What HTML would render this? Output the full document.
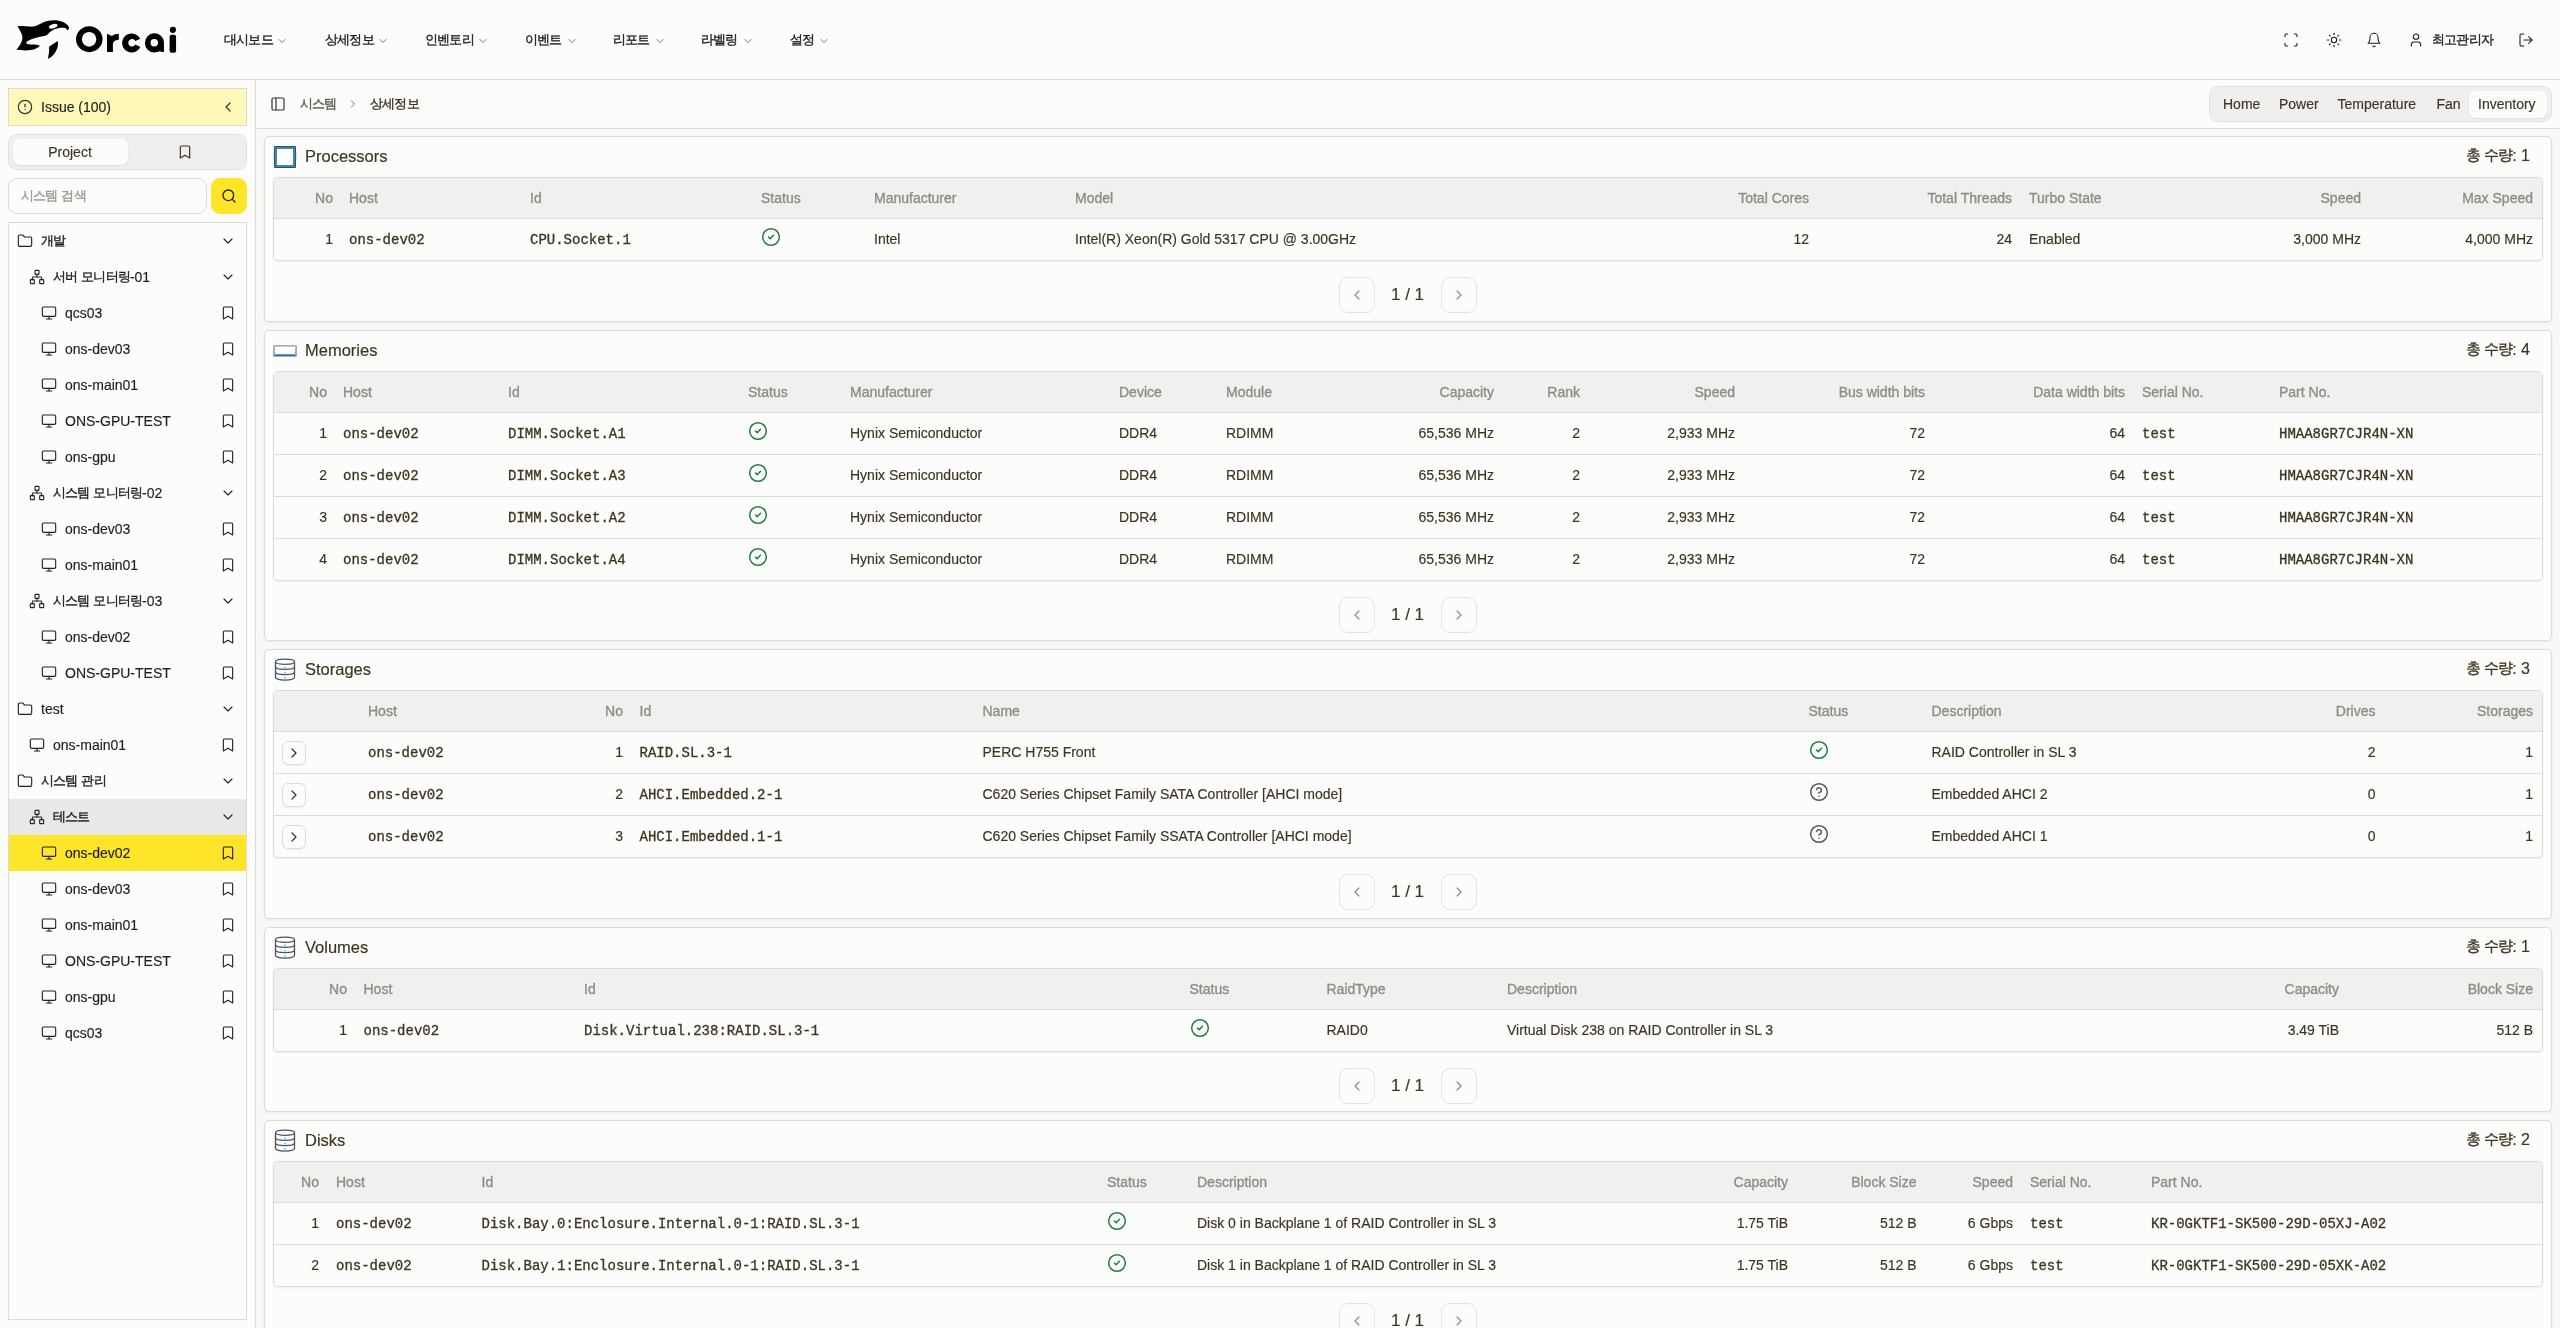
<!DOCTYPE html><html><head><meta charset="utf-8"><title>Orcai</title><style>*{box-sizing:border-box;margin:0;padding:0}
html,body{width:2560px;height:1328px;overflow:hidden;background:#fcfcfa;font-family:"Liberation Sans",sans-serif;}
.t{position:absolute;white-space:nowrap;-webkit-text-stroke:0.15px currentColor;}
.b{position:absolute;}
.ic{position:absolute;overflow:visible;}
.k{font-size:0.93em;letter-spacing:-0.064em;position:relative;top:-1px;-webkit-text-stroke:0.35px currentColor;}
</style></head><body><div id="root" style="position:absolute;left:0;top:0;width:2560px;height:1328px;overflow:hidden;will-change:transform"><div class="b" style="left:0px;top:0px;width:2560px;height:80px;background:#fcfcfa;border-bottom:1px solid #dcdbd7;"></div>
<svg class="ic" style="left:12px;top:14px;width:64px;height:48px" viewBox="0 0 1771 1328">
<path fill="#000" d="M150 340 C260 320 380 330 480 345 C560 355 620 350 700 310 C820 250 950 175 1150 170 C1330 168 1520 240 1575 360 C1585 400 1560 440 1530 455 C1510 400 1470 380 1420 380 C1260 385 1120 420 1010 540 C980 575 950 600 880 610 C700 640 520 690 410 760 C380 790 400 830 440 835 C560 840 700 840 775 880 C700 960 560 1010 380 1010 C260 1010 180 1000 120 985 C220 880 290 760 290 650 C290 560 220 460 150 340 Z"/>
<ellipse cx="1140" cy="340" rx="120" ry="58" transform="rotate(-16 1140 340)" fill="#fcfcfa"/>
<path fill="#000" d="M1025 905 C1100 850 1200 790 1265 745 C1290 850 1260 960 1200 1060 C1140 1150 1060 1220 995 1240 C1010 1130 1040 1050 1025 905 Z"/>
</svg>
<svg class="ic" style="left:72px;top:20px;width:110px;height:40px" viewBox="0 0 2560 931" fill="#000">
<path fill-rule="evenodd" d="M402 143 A308 303 0 1 1 402 749 A308 303 0 1 1 402 143 Z M398 277 A168 172 0 1 0 398 621 A168 172 0 1 0 398 277 Z"/>
<path d="M815 318 L930 372 C975 338 1025 322 1090 320 L1090 462 C1030 462 985 478 952 540 L952 745 L815 745 Z"/>
<path d="M1588 438 A222 222 0 1 0 1590 628 L1476 572 A88 88 0 1 1 1476 490 Z"/>
<path fill-rule="evenodd" d="M2140 520 L2140 745 L2080 745 L2045 722 C2005 745 1960 755 1915 755 A222 222 0 1 1 2140 520 Z M1915 443 A87 87 0 1 0 1915 617 A87 87 0 1 0 1915 443 Z"/>
<rect x="2272" y="345" width="150" height="415" rx="45"/>
<circle cx="2348" cy="228" r="72"/>
</svg>
<div class="t" style="left:224px;top:30.0px;height:20px;line-height:20px;font-size:14px;color:#1f1f1f;font-family:'Liberation Sans',sans-serif;font-weight:400;"><span class="k">대시보드</span></div>
<svg class="ic" style="left:275.5px;top:34.5px;width:12px;height:12px" viewBox="0 0 24 24" fill="none" stroke="#555" stroke-width="1.6" stroke-linecap="round" stroke-linejoin="round"><path d="m6 9 6 6 6-6"/></svg>
<div class="t" style="left:325px;top:30.0px;height:20px;line-height:20px;font-size:14px;color:#1f1f1f;font-family:'Liberation Sans',sans-serif;font-weight:400;"><span class="k">상세정보</span></div>
<svg class="ic" style="left:376.5px;top:34.5px;width:12px;height:12px" viewBox="0 0 24 24" fill="none" stroke="#555" stroke-width="1.6" stroke-linecap="round" stroke-linejoin="round"><path d="m6 9 6 6 6-6"/></svg>
<div class="t" style="left:425px;top:30.0px;height:20px;line-height:20px;font-size:14px;color:#1f1f1f;font-family:'Liberation Sans',sans-serif;font-weight:400;"><span class="k">인벤토리</span></div>
<svg class="ic" style="left:476.5px;top:34.5px;width:12px;height:12px" viewBox="0 0 24 24" fill="none" stroke="#555" stroke-width="1.6" stroke-linecap="round" stroke-linejoin="round"><path d="m6 9 6 6 6-6"/></svg>
<div class="t" style="left:525px;top:30.0px;height:20px;line-height:20px;font-size:14px;color:#1f1f1f;font-family:'Liberation Sans',sans-serif;font-weight:400;"><span class="k">이벤트</span></div>
<svg class="ic" style="left:566px;top:34.5px;width:12px;height:12px" viewBox="0 0 24 24" fill="none" stroke="#555" stroke-width="1.6" stroke-linecap="round" stroke-linejoin="round"><path d="m6 9 6 6 6-6"/></svg>
<div class="t" style="left:613px;top:30.0px;height:20px;line-height:20px;font-size:14px;color:#1f1f1f;font-family:'Liberation Sans',sans-serif;font-weight:400;"><span class="k">리포트</span></div>
<svg class="ic" style="left:654px;top:34.5px;width:12px;height:12px" viewBox="0 0 24 24" fill="none" stroke="#555" stroke-width="1.6" stroke-linecap="round" stroke-linejoin="round"><path d="m6 9 6 6 6-6"/></svg>
<div class="t" style="left:701px;top:30.0px;height:20px;line-height:20px;font-size:14px;color:#1f1f1f;font-family:'Liberation Sans',sans-serif;font-weight:400;"><span class="k">라벨링</span></div>
<svg class="ic" style="left:741.5px;top:34.5px;width:12px;height:12px" viewBox="0 0 24 24" fill="none" stroke="#555" stroke-width="1.6" stroke-linecap="round" stroke-linejoin="round"><path d="m6 9 6 6 6-6"/></svg>
<div class="t" style="left:790px;top:30.0px;height:20px;line-height:20px;font-size:14px;color:#1f1f1f;font-family:'Liberation Sans',sans-serif;font-weight:400;"><span class="k">설정</span></div>
<svg class="ic" style="left:818px;top:34.5px;width:12px;height:12px" viewBox="0 0 24 24" fill="none" stroke="#555" stroke-width="1.6" stroke-linecap="round" stroke-linejoin="round"><path d="m6 9 6 6 6-6"/></svg>
<svg class="ic" style="left:2283px;top:32px;width:16px;height:16px" viewBox="0 0 24 24" fill="none" stroke="#1f1f1f" stroke-width="1.6" stroke-linecap="round" stroke-linejoin="round"><path d="M3 7V5a2 2 0 0 1 2-2h2"/><path d="M17 3h2a2 2 0 0 1 2 2v2"/><path d="M21 17v2a2 2 0 0 1-2 2h-2"/><path d="M7 21H5a2 2 0 0 1-2-2v-2"/></svg>
<svg class="ic" style="left:2326px;top:32px;width:16px;height:16px" viewBox="0 0 24 24" fill="none" stroke="#1f1f1f" stroke-width="1.6" stroke-linecap="round" stroke-linejoin="round"><circle cx="12" cy="12" r="4"/><path d="M12 2v2"/><path d="M12 20v2"/><path d="m4.93 4.93 1.41 1.41"/><path d="m17.66 17.66 1.41 1.41"/><path d="M2 12h2"/><path d="M20 12h2"/><path d="m6.34 17.66-1.41 1.41"/><path d="m19.07 4.93-1.41 1.41"/></svg>
<svg class="ic" style="left:2366px;top:32px;width:16px;height:16px" viewBox="0 0 24 24" fill="none" stroke="#1f1f1f" stroke-width="1.6" stroke-linecap="round" stroke-linejoin="round"><path d="M6 8a6 6 0 0 1 12 0c0 7 3 9 3 9H3s3-2 3-9"/><path d="M10.3 21a1.94 1.94 0 0 0 3.4 0"/></svg>
<svg class="ic" style="left:2408px;top:32px;width:16px;height:16px" viewBox="0 0 24 24" fill="none" stroke="#1f1f1f" stroke-width="1.6" stroke-linecap="round" stroke-linejoin="round"><path d="M19 21v-2a4 4 0 0 0-4-4H9a4 4 0 0 0-4 4v2"/><circle cx="12" cy="7" r="4"/></svg>
<div class="t" style="left:2432px;top:30.0px;height:20px;line-height:20px;font-size:14px;color:#1f1f1f;font-family:'Liberation Sans',sans-serif;font-weight:400;"><span class="k">최고관리자</span></div>
<svg class="ic" style="left:2518px;top:32px;width:16px;height:16px" viewBox="0 0 24 24" fill="none" stroke="#1f1f1f" stroke-width="1.6" stroke-linecap="round" stroke-linejoin="round"><path d="M9 21H5a2 2 0 0 1-2-2V5a2 2 0 0 1 2-2h4"/><polyline points="16 17 21 12 16 7"/><line x1="21" x2="9" y1="12" y2="12"/></svg>
<div class="b" style="left:0px;top:80px;width:256px;height:1248px;background:#fcfcfa;border-right:1px solid #dcdbd7;"></div>
<div class="b" style="left:8px;top:88px;width:239px;height:38px;background:#fff9b9;border:1px solid #d9d8d2;"></div>
<svg class="ic" style="left:17px;top:99px;width:16px;height:16px" viewBox="0 0 24 24" fill="none" stroke="#333" stroke-width="1.8" stroke-linecap="round" stroke-linejoin="round"><circle cx="12" cy="12" r="10"/><line x1="12" x2="12" y1="8" y2="12"/><line x1="12" x2="12.01" y1="16" y2="16"/></svg>
<div class="t" style="left:41px;top:97.0px;height:20px;line-height:20px;font-size:14px;color:#1f1f1f;font-family:'Liberation Sans',sans-serif;font-weight:400;">Issue (100)</div>
<svg class="ic" style="left:220px;top:99px;width:16px;height:16px" viewBox="0 0 24 24" fill="none" stroke="#333" stroke-width="1.8" stroke-linecap="round" stroke-linejoin="round"><path d="m15 18-6-6 6-6"/></svg>
<div class="b" style="left:8px;top:134px;width:239px;height:36px;background:#f0efed;border:1px solid #e2e1dd;border-radius:9px;"></div>
<div class="b" style="left:13px;top:139px;width:115px;height:26px;background:#fcfcfa;border-radius:7px;box-shadow:0 1px 2px rgba(0,0,0,0.08);"></div>
<div class="t" style="left:-230px;width:600px;text-align:center;top:142.0px;height:20px;line-height:20px;font-size:14px;color:#3d3320;font-family:'Liberation Sans',sans-serif;font-weight:400;">Project</div>
<svg class="ic" style="left:177px;top:144px;width:16px;height:16px" viewBox="0 0 24 24" fill="none" stroke="#3d3320" stroke-width="1.8" stroke-linecap="round" stroke-linejoin="round"><path d="m19 21-7-4-7 4V5a2 2 0 0 1 2-2h10a2 2 0 0 1 2 2v16z"/></svg>
<div class="b" style="left:8px;top:178px;width:199px;height:36px;background:#fcfcfa;border:1px solid #dcdbd7;border-radius:9px;"></div>
<div class="t" style="left:21px;top:186.0px;height:20px;line-height:20px;font-size:14px;color:#9b9a95;font-family:'Liberation Sans',sans-serif;font-weight:400;"><span class="k">시스템</span> <span class="k">검색</span></div>
<div class="b" style="left:211px;top:178px;width:36px;height:36px;background:#ffe52a;border-radius:9px;"></div>
<svg class="ic" style="left:221px;top:188px;width:16px;height:16px" viewBox="0 0 24 24" fill="none" stroke="#222" stroke-width="2" stroke-linecap="round" stroke-linejoin="round"><circle cx="11" cy="11" r="8"/><path d="m21 21-4.3-4.3"/></svg>
<div class="b" style="left:8px;top:222px;width:239px;height:1098px;background:#fcfcfa;border:1px solid #dcdbd7;"></div>
<svg class="ic" style="left:17px;top:233px;width:16px;height:16px" viewBox="0 0 24 24" fill="none" stroke="#222" stroke-width="1.7" stroke-linecap="round" stroke-linejoin="round"><path d="M20 20a2 2 0 0 0 2-2V8a2 2 0 0 0-2-2h-7.9a2 2 0 0 1-1.69-.9L9.6 3.9A2 2 0 0 0 7.93 3H4a2 2 0 0 0-2 2v13a2 2 0 0 0 2 2Z"/></svg>
<div class="t" style="left:41px;top:231.0px;height:20px;line-height:20px;font-size:14px;color:#1f1f1f;font-family:'Liberation Sans',sans-serif;font-weight:400;"><span class="k">개발</span></div>
<svg class="ic" style="left:220px;top:233px;width:16px;height:16px" viewBox="0 0 24 24" fill="none" stroke="#222" stroke-width="1.7" stroke-linecap="round" stroke-linejoin="round"><path d="m6 9 6 6 6-6"/></svg>
<svg class="ic" style="left:29px;top:269px;width:16px;height:16px" viewBox="0 0 24 24" fill="none" stroke="#222" stroke-width="1.7" stroke-linecap="round" stroke-linejoin="round"><rect x="16" y="16" width="6" height="6" rx="1"/><rect x="2" y="16" width="6" height="6" rx="1"/><rect x="9" y="2" width="6" height="6" rx="1"/><path d="M5 16v-3a1 1 0 0 1 1-1h12a1 1 0 0 1 1 1v3"/><path d="M12 12V8"/></svg>
<div class="t" style="left:53px;top:267.0px;height:20px;line-height:20px;font-size:14px;color:#1f1f1f;font-family:'Liberation Sans',sans-serif;font-weight:400;"><span class="k">서버</span> <span class="k">모니터링</span>-01</div>
<svg class="ic" style="left:220px;top:269px;width:16px;height:16px" viewBox="0 0 24 24" fill="none" stroke="#222" stroke-width="1.7" stroke-linecap="round" stroke-linejoin="round"><path d="m6 9 6 6 6-6"/></svg>
<svg class="ic" style="left:41px;top:305px;width:16px;height:16px" viewBox="0 0 24 24" fill="none" stroke="#222" stroke-width="1.7" stroke-linecap="round" stroke-linejoin="round"><rect width="20" height="14" x="2" y="3" rx="2"/><line x1="8" x2="16" y1="21" y2="21"/><line x1="12" x2="12" y1="17" y2="21"/></svg>
<div class="t" style="left:65px;top:303.0px;height:20px;line-height:20px;font-size:14px;color:#1f1f1f;font-family:'Liberation Sans',sans-serif;font-weight:400;">qcs03</div>
<svg class="ic" style="left:220px;top:305px;width:16px;height:16px" viewBox="0 0 24 24" fill="none" stroke="#222" stroke-width="1.7" stroke-linecap="round" stroke-linejoin="round"><path d="m19 21-7-4-7 4V5a2 2 0 0 1 2-2h10a2 2 0 0 1 2 2v16z"/></svg>
<svg class="ic" style="left:41px;top:341px;width:16px;height:16px" viewBox="0 0 24 24" fill="none" stroke="#222" stroke-width="1.7" stroke-linecap="round" stroke-linejoin="round"><rect width="20" height="14" x="2" y="3" rx="2"/><line x1="8" x2="16" y1="21" y2="21"/><line x1="12" x2="12" y1="17" y2="21"/></svg>
<div class="t" style="left:65px;top:339.0px;height:20px;line-height:20px;font-size:14px;color:#1f1f1f;font-family:'Liberation Sans',sans-serif;font-weight:400;">ons-dev03</div>
<svg class="ic" style="left:220px;top:341px;width:16px;height:16px" viewBox="0 0 24 24" fill="none" stroke="#222" stroke-width="1.7" stroke-linecap="round" stroke-linejoin="round"><path d="m19 21-7-4-7 4V5a2 2 0 0 1 2-2h10a2 2 0 0 1 2 2v16z"/></svg>
<svg class="ic" style="left:41px;top:377px;width:16px;height:16px" viewBox="0 0 24 24" fill="none" stroke="#222" stroke-width="1.7" stroke-linecap="round" stroke-linejoin="round"><rect width="20" height="14" x="2" y="3" rx="2"/><line x1="8" x2="16" y1="21" y2="21"/><line x1="12" x2="12" y1="17" y2="21"/></svg>
<div class="t" style="left:65px;top:375.0px;height:20px;line-height:20px;font-size:14px;color:#1f1f1f;font-family:'Liberation Sans',sans-serif;font-weight:400;">ons-main01</div>
<svg class="ic" style="left:220px;top:377px;width:16px;height:16px" viewBox="0 0 24 24" fill="none" stroke="#222" stroke-width="1.7" stroke-linecap="round" stroke-linejoin="round"><path d="m19 21-7-4-7 4V5a2 2 0 0 1 2-2h10a2 2 0 0 1 2 2v16z"/></svg>
<svg class="ic" style="left:41px;top:413px;width:16px;height:16px" viewBox="0 0 24 24" fill="none" stroke="#222" stroke-width="1.7" stroke-linecap="round" stroke-linejoin="round"><rect width="20" height="14" x="2" y="3" rx="2"/><line x1="8" x2="16" y1="21" y2="21"/><line x1="12" x2="12" y1="17" y2="21"/></svg>
<div class="t" style="left:65px;top:411.0px;height:20px;line-height:20px;font-size:14px;color:#1f1f1f;font-family:'Liberation Sans',sans-serif;font-weight:400;">ONS-GPU-TEST</div>
<svg class="ic" style="left:220px;top:413px;width:16px;height:16px" viewBox="0 0 24 24" fill="none" stroke="#222" stroke-width="1.7" stroke-linecap="round" stroke-linejoin="round"><path d="m19 21-7-4-7 4V5a2 2 0 0 1 2-2h10a2 2 0 0 1 2 2v16z"/></svg>
<svg class="ic" style="left:41px;top:449px;width:16px;height:16px" viewBox="0 0 24 24" fill="none" stroke="#222" stroke-width="1.7" stroke-linecap="round" stroke-linejoin="round"><rect width="20" height="14" x="2" y="3" rx="2"/><line x1="8" x2="16" y1="21" y2="21"/><line x1="12" x2="12" y1="17" y2="21"/></svg>
<div class="t" style="left:65px;top:447.0px;height:20px;line-height:20px;font-size:14px;color:#1f1f1f;font-family:'Liberation Sans',sans-serif;font-weight:400;">ons-gpu</div>
<svg class="ic" style="left:220px;top:449px;width:16px;height:16px" viewBox="0 0 24 24" fill="none" stroke="#222" stroke-width="1.7" stroke-linecap="round" stroke-linejoin="round"><path d="m19 21-7-4-7 4V5a2 2 0 0 1 2-2h10a2 2 0 0 1 2 2v16z"/></svg>
<svg class="ic" style="left:29px;top:485px;width:16px;height:16px" viewBox="0 0 24 24" fill="none" stroke="#222" stroke-width="1.7" stroke-linecap="round" stroke-linejoin="round"><rect x="16" y="16" width="6" height="6" rx="1"/><rect x="2" y="16" width="6" height="6" rx="1"/><rect x="9" y="2" width="6" height="6" rx="1"/><path d="M5 16v-3a1 1 0 0 1 1-1h12a1 1 0 0 1 1 1v3"/><path d="M12 12V8"/></svg>
<div class="t" style="left:53px;top:483.0px;height:20px;line-height:20px;font-size:14px;color:#1f1f1f;font-family:'Liberation Sans',sans-serif;font-weight:400;"><span class="k">시스템</span> <span class="k">모니터링</span>-02</div>
<svg class="ic" style="left:220px;top:485px;width:16px;height:16px" viewBox="0 0 24 24" fill="none" stroke="#222" stroke-width="1.7" stroke-linecap="round" stroke-linejoin="round"><path d="m6 9 6 6 6-6"/></svg>
<svg class="ic" style="left:41px;top:521px;width:16px;height:16px" viewBox="0 0 24 24" fill="none" stroke="#222" stroke-width="1.7" stroke-linecap="round" stroke-linejoin="round"><rect width="20" height="14" x="2" y="3" rx="2"/><line x1="8" x2="16" y1="21" y2="21"/><line x1="12" x2="12" y1="17" y2="21"/></svg>
<div class="t" style="left:65px;top:519.0px;height:20px;line-height:20px;font-size:14px;color:#1f1f1f;font-family:'Liberation Sans',sans-serif;font-weight:400;">ons-dev03</div>
<svg class="ic" style="left:220px;top:521px;width:16px;height:16px" viewBox="0 0 24 24" fill="none" stroke="#222" stroke-width="1.7" stroke-linecap="round" stroke-linejoin="round"><path d="m19 21-7-4-7 4V5a2 2 0 0 1 2-2h10a2 2 0 0 1 2 2v16z"/></svg>
<svg class="ic" style="left:41px;top:557px;width:16px;height:16px" viewBox="0 0 24 24" fill="none" stroke="#222" stroke-width="1.7" stroke-linecap="round" stroke-linejoin="round"><rect width="20" height="14" x="2" y="3" rx="2"/><line x1="8" x2="16" y1="21" y2="21"/><line x1="12" x2="12" y1="17" y2="21"/></svg>
<div class="t" style="left:65px;top:555.0px;height:20px;line-height:20px;font-size:14px;color:#1f1f1f;font-family:'Liberation Sans',sans-serif;font-weight:400;">ons-main01</div>
<svg class="ic" style="left:220px;top:557px;width:16px;height:16px" viewBox="0 0 24 24" fill="none" stroke="#222" stroke-width="1.7" stroke-linecap="round" stroke-linejoin="round"><path d="m19 21-7-4-7 4V5a2 2 0 0 1 2-2h10a2 2 0 0 1 2 2v16z"/></svg>
<svg class="ic" style="left:29px;top:593px;width:16px;height:16px" viewBox="0 0 24 24" fill="none" stroke="#222" stroke-width="1.7" stroke-linecap="round" stroke-linejoin="round"><rect x="16" y="16" width="6" height="6" rx="1"/><rect x="2" y="16" width="6" height="6" rx="1"/><rect x="9" y="2" width="6" height="6" rx="1"/><path d="M5 16v-3a1 1 0 0 1 1-1h12a1 1 0 0 1 1 1v3"/><path d="M12 12V8"/></svg>
<div class="t" style="left:53px;top:591.0px;height:20px;line-height:20px;font-size:14px;color:#1f1f1f;font-family:'Liberation Sans',sans-serif;font-weight:400;"><span class="k">시스템</span> <span class="k">모니터링</span>-03</div>
<svg class="ic" style="left:220px;top:593px;width:16px;height:16px" viewBox="0 0 24 24" fill="none" stroke="#222" stroke-width="1.7" stroke-linecap="round" stroke-linejoin="round"><path d="m6 9 6 6 6-6"/></svg>
<svg class="ic" style="left:41px;top:629px;width:16px;height:16px" viewBox="0 0 24 24" fill="none" stroke="#222" stroke-width="1.7" stroke-linecap="round" stroke-linejoin="round"><rect width="20" height="14" x="2" y="3" rx="2"/><line x1="8" x2="16" y1="21" y2="21"/><line x1="12" x2="12" y1="17" y2="21"/></svg>
<div class="t" style="left:65px;top:627.0px;height:20px;line-height:20px;font-size:14px;color:#1f1f1f;font-family:'Liberation Sans',sans-serif;font-weight:400;">ons-dev02</div>
<svg class="ic" style="left:220px;top:629px;width:16px;height:16px" viewBox="0 0 24 24" fill="none" stroke="#222" stroke-width="1.7" stroke-linecap="round" stroke-linejoin="round"><path d="m19 21-7-4-7 4V5a2 2 0 0 1 2-2h10a2 2 0 0 1 2 2v16z"/></svg>
<svg class="ic" style="left:41px;top:665px;width:16px;height:16px" viewBox="0 0 24 24" fill="none" stroke="#222" stroke-width="1.7" stroke-linecap="round" stroke-linejoin="round"><rect width="20" height="14" x="2" y="3" rx="2"/><line x1="8" x2="16" y1="21" y2="21"/><line x1="12" x2="12" y1="17" y2="21"/></svg>
<div class="t" style="left:65px;top:663.0px;height:20px;line-height:20px;font-size:14px;color:#1f1f1f;font-family:'Liberation Sans',sans-serif;font-weight:400;">ONS-GPU-TEST</div>
<svg class="ic" style="left:220px;top:665px;width:16px;height:16px" viewBox="0 0 24 24" fill="none" stroke="#222" stroke-width="1.7" stroke-linecap="round" stroke-linejoin="round"><path d="m19 21-7-4-7 4V5a2 2 0 0 1 2-2h10a2 2 0 0 1 2 2v16z"/></svg>
<svg class="ic" style="left:17px;top:701px;width:16px;height:16px" viewBox="0 0 24 24" fill="none" stroke="#222" stroke-width="1.7" stroke-linecap="round" stroke-linejoin="round"><path d="M20 20a2 2 0 0 0 2-2V8a2 2 0 0 0-2-2h-7.9a2 2 0 0 1-1.69-.9L9.6 3.9A2 2 0 0 0 7.93 3H4a2 2 0 0 0-2 2v13a2 2 0 0 0 2 2Z"/></svg>
<div class="t" style="left:41px;top:699.0px;height:20px;line-height:20px;font-size:14px;color:#1f1f1f;font-family:'Liberation Sans',sans-serif;font-weight:400;">test</div>
<svg class="ic" style="left:220px;top:701px;width:16px;height:16px" viewBox="0 0 24 24" fill="none" stroke="#222" stroke-width="1.7" stroke-linecap="round" stroke-linejoin="round"><path d="m6 9 6 6 6-6"/></svg>
<svg class="ic" style="left:29px;top:737px;width:16px;height:16px" viewBox="0 0 24 24" fill="none" stroke="#222" stroke-width="1.7" stroke-linecap="round" stroke-linejoin="round"><rect width="20" height="14" x="2" y="3" rx="2"/><line x1="8" x2="16" y1="21" y2="21"/><line x1="12" x2="12" y1="17" y2="21"/></svg>
<div class="t" style="left:53px;top:735.0px;height:20px;line-height:20px;font-size:14px;color:#1f1f1f;font-family:'Liberation Sans',sans-serif;font-weight:400;">ons-main01</div>
<svg class="ic" style="left:220px;top:737px;width:16px;height:16px" viewBox="0 0 24 24" fill="none" stroke="#222" stroke-width="1.7" stroke-linecap="round" stroke-linejoin="round"><path d="m19 21-7-4-7 4V5a2 2 0 0 1 2-2h10a2 2 0 0 1 2 2v16z"/></svg>
<svg class="ic" style="left:17px;top:773px;width:16px;height:16px" viewBox="0 0 24 24" fill="none" stroke="#222" stroke-width="1.7" stroke-linecap="round" stroke-linejoin="round"><path d="M20 20a2 2 0 0 0 2-2V8a2 2 0 0 0-2-2h-7.9a2 2 0 0 1-1.69-.9L9.6 3.9A2 2 0 0 0 7.93 3H4a2 2 0 0 0-2 2v13a2 2 0 0 0 2 2Z"/></svg>
<div class="t" style="left:41px;top:771.0px;height:20px;line-height:20px;font-size:14px;color:#1f1f1f;font-family:'Liberation Sans',sans-serif;font-weight:400;"><span class="k">시스템</span> <span class="k">관리</span></div>
<svg class="ic" style="left:220px;top:773px;width:16px;height:16px" viewBox="0 0 24 24" fill="none" stroke="#222" stroke-width="1.7" stroke-linecap="round" stroke-linejoin="round"><path d="m6 9 6 6 6-6"/></svg>
<div class="b" style="left:9px;top:799px;width:237px;height:36px;background:#e8e8e7;"></div>
<svg class="ic" style="left:29px;top:809px;width:16px;height:16px" viewBox="0 0 24 24" fill="none" stroke="#222" stroke-width="1.7" stroke-linecap="round" stroke-linejoin="round"><rect x="16" y="16" width="6" height="6" rx="1"/><rect x="2" y="16" width="6" height="6" rx="1"/><rect x="9" y="2" width="6" height="6" rx="1"/><path d="M5 16v-3a1 1 0 0 1 1-1h12a1 1 0 0 1 1 1v3"/><path d="M12 12V8"/></svg>
<div class="t" style="left:53px;top:807.0px;height:20px;line-height:20px;font-size:14px;color:#1f1f1f;font-family:'Liberation Sans',sans-serif;font-weight:400;"><span class="k">테스트</span></div>
<svg class="ic" style="left:220px;top:809px;width:16px;height:16px" viewBox="0 0 24 24" fill="none" stroke="#222" stroke-width="1.7" stroke-linecap="round" stroke-linejoin="round"><path d="m6 9 6 6 6-6"/></svg>
<div class="b" style="left:9px;top:835px;width:237px;height:36px;background:#ffe52a;"></div>
<svg class="ic" style="left:41px;top:845px;width:16px;height:16px" viewBox="0 0 24 24" fill="none" stroke="#222" stroke-width="1.7" stroke-linecap="round" stroke-linejoin="round"><rect width="20" height="14" x="2" y="3" rx="2"/><line x1="8" x2="16" y1="21" y2="21"/><line x1="12" x2="12" y1="17" y2="21"/></svg>
<div class="t" style="left:65px;top:843.0px;height:20px;line-height:20px;font-size:14px;color:#1f1f1f;font-family:'Liberation Sans',sans-serif;font-weight:400;">ons-dev02</div>
<svg class="ic" style="left:220px;top:845px;width:16px;height:16px" viewBox="0 0 24 24" fill="none" stroke="#222" stroke-width="1.7" stroke-linecap="round" stroke-linejoin="round"><path d="m19 21-7-4-7 4V5a2 2 0 0 1 2-2h10a2 2 0 0 1 2 2v16z"/></svg>
<svg class="ic" style="left:41px;top:881px;width:16px;height:16px" viewBox="0 0 24 24" fill="none" stroke="#222" stroke-width="1.7" stroke-linecap="round" stroke-linejoin="round"><rect width="20" height="14" x="2" y="3" rx="2"/><line x1="8" x2="16" y1="21" y2="21"/><line x1="12" x2="12" y1="17" y2="21"/></svg>
<div class="t" style="left:65px;top:879.0px;height:20px;line-height:20px;font-size:14px;color:#1f1f1f;font-family:'Liberation Sans',sans-serif;font-weight:400;">ons-dev03</div>
<svg class="ic" style="left:220px;top:881px;width:16px;height:16px" viewBox="0 0 24 24" fill="none" stroke="#222" stroke-width="1.7" stroke-linecap="round" stroke-linejoin="round"><path d="m19 21-7-4-7 4V5a2 2 0 0 1 2-2h10a2 2 0 0 1 2 2v16z"/></svg>
<svg class="ic" style="left:41px;top:917px;width:16px;height:16px" viewBox="0 0 24 24" fill="none" stroke="#222" stroke-width="1.7" stroke-linecap="round" stroke-linejoin="round"><rect width="20" height="14" x="2" y="3" rx="2"/><line x1="8" x2="16" y1="21" y2="21"/><line x1="12" x2="12" y1="17" y2="21"/></svg>
<div class="t" style="left:65px;top:915.0px;height:20px;line-height:20px;font-size:14px;color:#1f1f1f;font-family:'Liberation Sans',sans-serif;font-weight:400;">ons-main01</div>
<svg class="ic" style="left:220px;top:917px;width:16px;height:16px" viewBox="0 0 24 24" fill="none" stroke="#222" stroke-width="1.7" stroke-linecap="round" stroke-linejoin="round"><path d="m19 21-7-4-7 4V5a2 2 0 0 1 2-2h10a2 2 0 0 1 2 2v16z"/></svg>
<svg class="ic" style="left:41px;top:953px;width:16px;height:16px" viewBox="0 0 24 24" fill="none" stroke="#222" stroke-width="1.7" stroke-linecap="round" stroke-linejoin="round"><rect width="20" height="14" x="2" y="3" rx="2"/><line x1="8" x2="16" y1="21" y2="21"/><line x1="12" x2="12" y1="17" y2="21"/></svg>
<div class="t" style="left:65px;top:951.0px;height:20px;line-height:20px;font-size:14px;color:#1f1f1f;font-family:'Liberation Sans',sans-serif;font-weight:400;">ONS-GPU-TEST</div>
<svg class="ic" style="left:220px;top:953px;width:16px;height:16px" viewBox="0 0 24 24" fill="none" stroke="#222" stroke-width="1.7" stroke-linecap="round" stroke-linejoin="round"><path d="m19 21-7-4-7 4V5a2 2 0 0 1 2-2h10a2 2 0 0 1 2 2v16z"/></svg>
<svg class="ic" style="left:41px;top:989px;width:16px;height:16px" viewBox="0 0 24 24" fill="none" stroke="#222" stroke-width="1.7" stroke-linecap="round" stroke-linejoin="round"><rect width="20" height="14" x="2" y="3" rx="2"/><line x1="8" x2="16" y1="21" y2="21"/><line x1="12" x2="12" y1="17" y2="21"/></svg>
<div class="t" style="left:65px;top:987.0px;height:20px;line-height:20px;font-size:14px;color:#1f1f1f;font-family:'Liberation Sans',sans-serif;font-weight:400;">ons-gpu</div>
<svg class="ic" style="left:220px;top:989px;width:16px;height:16px" viewBox="0 0 24 24" fill="none" stroke="#222" stroke-width="1.7" stroke-linecap="round" stroke-linejoin="round"><path d="m19 21-7-4-7 4V5a2 2 0 0 1 2-2h10a2 2 0 0 1 2 2v16z"/></svg>
<svg class="ic" style="left:41px;top:1025px;width:16px;height:16px" viewBox="0 0 24 24" fill="none" stroke="#222" stroke-width="1.7" stroke-linecap="round" stroke-linejoin="round"><rect width="20" height="14" x="2" y="3" rx="2"/><line x1="8" x2="16" y1="21" y2="21"/><line x1="12" x2="12" y1="17" y2="21"/></svg>
<div class="t" style="left:65px;top:1023.0px;height:20px;line-height:20px;font-size:14px;color:#1f1f1f;font-family:'Liberation Sans',sans-serif;font-weight:400;">qcs03</div>
<svg class="ic" style="left:220px;top:1025px;width:16px;height:16px" viewBox="0 0 24 24" fill="none" stroke="#222" stroke-width="1.7" stroke-linecap="round" stroke-linejoin="round"><path d="m19 21-7-4-7 4V5a2 2 0 0 1 2-2h10a2 2 0 0 1 2 2v16z"/></svg>
<div class="b" style="left:256px;top:80px;width:2304px;height:49px;background:#fcfcfa;border-bottom:1px solid #dcdbd7;"></div>
<div class="b" style="left:256px;top:129px;width:2304px;height:1199px;background:#f8f8f7;"></div>
<svg class="ic" style="left:270px;top:96px;width:16px;height:16px" viewBox="0 0 24 24" fill="none" stroke="#333" stroke-width="1.8" stroke-linecap="round" stroke-linejoin="round"><rect width="18" height="18" x="3" y="3" rx="2"/><path d="M9 3v18"/></svg>
<div class="t" style="left:300px;top:94.0px;height:20px;line-height:20px;font-size:14px;color:#5c5a55;font-family:'Liberation Sans',sans-serif;font-weight:400;"><span class="k">시스템</span></div>
<svg class="ic" style="left:347px;top:98px;width:12px;height:12px" viewBox="0 0 24 24" fill="none" stroke="#555" stroke-width="1.6" stroke-linecap="round" stroke-linejoin="round"><path d="m9 18 6-6-6-6"/></svg>
<div class="t" style="left:370px;top:94.0px;height:20px;line-height:20px;font-size:14px;color:#3d3320;font-family:'Liberation Sans',sans-serif;font-weight:400;"><span class="k">상세정보</span></div>
<div class="b" style="left:2209px;top:86px;width:343px;height:36px;background:#f0efed;border:1px solid #e2e1dd;border-radius:9px;"></div>
<div class="b" style="left:2469px;top:91px;width:78px;height:27px;background:#fcfcfa;border-radius:7px;box-shadow:0 1px 2px rgba(0,0,0,0.08);"></div>
<div class="t" style="left:2223px;top:94.0px;height:20px;line-height:20px;font-size:14px;color:#3d3320;font-family:'Liberation Sans',sans-serif;font-weight:400;">Home</div>
<div class="t" style="left:2279px;top:94.0px;height:20px;line-height:20px;font-size:14px;color:#3d3320;font-family:'Liberation Sans',sans-serif;font-weight:400;">Power</div>
<div class="t" style="left:2337.5px;top:94.0px;height:20px;line-height:20px;font-size:14px;color:#3d3320;font-family:'Liberation Sans',sans-serif;font-weight:400;">Temperature</div>
<div class="t" style="left:2436.5px;top:94.0px;height:20px;line-height:20px;font-size:14px;color:#3d3320;font-family:'Liberation Sans',sans-serif;font-weight:400;">Fan</div>
<div class="t" style="left:2478px;top:94.0px;height:20px;line-height:20px;font-size:14px;color:#3d3320;font-family:'Liberation Sans',sans-serif;font-weight:400;">Inventory</div>
<div class="b" style="left:264px;top:136px;width:2288px;height:186px;background:#fcfcfa;border:1px solid #dcdbd7;border-radius:5px;box-shadow:0 1px 3px rgba(0,0,0,0.06);"></div>
<svg class="ic" style="left:273px;top:145px;width:24px;height:24px" viewBox="0 0 24 24"><rect x="1" y="1" width="22" height="22" rx="1" fill="#3b4756"/><rect x="1.9" y="1.9" width="20.2" height="20.2" fill="#2a8cc4"/><rect x="3.7" y="3.7" width="16.6" height="16.6" fill="#fff" stroke="#3b5466" stroke-width="0.5"/><g stroke="#6b7785" stroke-width="0.8"><line x1="0.3" y1="8" x2="1.6" y2="8"/><line x1="0.3" y1="11" x2="1.6" y2="11"/><line x1="0.3" y1="14" x2="1.6" y2="14"/><line x1="22.4" y1="8" x2="23.7" y2="8"/><line x1="22.4" y1="11" x2="23.7" y2="11"/><line x1="22.4" y1="14" x2="23.7" y2="14"/></g></svg>
<div class="t" style="left:305px;top:144.0px;height:24px;line-height:24px;font-size:16.5px;color:#3d3320;font-family:'Liberation Sans',sans-serif;font-weight:400;">Processors</div>
<div class="t" style="right:30px;top:144.0px;height:24px;line-height:24px;font-size:16px;color:#3d3320;font-family:'Liberation Sans',sans-serif;font-weight:400;"><span class="k">총</span> <span class="k">수량</span>: 1</div>
<div class="b" style="left:273px;top:177px;width:2270px;height:84px;background:#fcfcfa;border:1px solid #dcdbd7;border-radius:5px;box-shadow:0 1px 2px rgba(0,0,0,0.05);overflow:hidden;"></div>
<div class="b" style="left:274px;top:178px;width:2268px;height:41px;background:#f1f0ee;border-bottom:1px solid #dcdbd7;border-radius:4px 4px 0 0;"></div>
<div class="t" style="right:2227px;top:187.5px;height:20px;line-height:20px;font-size:14px;color:#8f8d86;font-family:'Liberation Sans',sans-serif;font-weight:400;-webkit-text-stroke:0.35px #8f8d86;">No</div>
<div class="t" style="left:349px;top:187.5px;height:20px;line-height:20px;font-size:14px;color:#8f8d86;font-family:'Liberation Sans',sans-serif;font-weight:400;-webkit-text-stroke:0.35px #8f8d86;">Host</div>
<div class="t" style="left:530px;top:187.5px;height:20px;line-height:20px;font-size:14px;color:#8f8d86;font-family:'Liberation Sans',sans-serif;font-weight:400;-webkit-text-stroke:0.35px #8f8d86;">Id</div>
<div class="t" style="left:761px;top:187.5px;height:20px;line-height:20px;font-size:14px;color:#8f8d86;font-family:'Liberation Sans',sans-serif;font-weight:400;-webkit-text-stroke:0.35px #8f8d86;">Status</div>
<div class="t" style="left:874px;top:187.5px;height:20px;line-height:20px;font-size:14px;color:#8f8d86;font-family:'Liberation Sans',sans-serif;font-weight:400;-webkit-text-stroke:0.35px #8f8d86;">Manufacturer</div>
<div class="t" style="left:1075px;top:187.5px;height:20px;line-height:20px;font-size:14px;color:#8f8d86;font-family:'Liberation Sans',sans-serif;font-weight:400;-webkit-text-stroke:0.35px #8f8d86;">Model</div>
<div class="t" style="right:751px;top:187.5px;height:20px;line-height:20px;font-size:14px;color:#8f8d86;font-family:'Liberation Sans',sans-serif;font-weight:400;-webkit-text-stroke:0.35px #8f8d86;">Total Cores</div>
<div class="t" style="right:548px;top:187.5px;height:20px;line-height:20px;font-size:14px;color:#8f8d86;font-family:'Liberation Sans',sans-serif;font-weight:400;-webkit-text-stroke:0.35px #8f8d86;">Total Threads</div>
<div class="t" style="left:2029px;top:187.5px;height:20px;line-height:20px;font-size:14px;color:#8f8d86;font-family:'Liberation Sans',sans-serif;font-weight:400;-webkit-text-stroke:0.35px #8f8d86;">Turbo State</div>
<div class="t" style="right:199px;top:187.5px;height:20px;line-height:20px;font-size:14px;color:#8f8d86;font-family:'Liberation Sans',sans-serif;font-weight:400;-webkit-text-stroke:0.35px #8f8d86;">Speed</div>
<div class="t" style="right:27px;top:187.5px;height:20px;line-height:20px;font-size:14px;color:#8f8d86;font-family:'Liberation Sans',sans-serif;font-weight:400;-webkit-text-stroke:0.35px #8f8d86;">Max Speed</div>
<div class="t" style="right:2227px;top:229.0px;height:20px;line-height:20px;font-size:14px;color:#3d3320;font-family:'Liberation Sans',sans-serif;font-weight:400;">1</div>
<div class="t" style="left:349px;top:229.5px;height:20px;line-height:20px;font-size:14px;color:#3d3320;font-family:'Liberation Mono',monospace;font-weight:400;-webkit-text-stroke:0.3px #3d3320;">ons-dev02</div>
<div class="t" style="left:530px;top:229.5px;height:20px;line-height:20px;font-size:14px;color:#3d3320;font-family:'Liberation Mono',monospace;font-weight:400;-webkit-text-stroke:0.3px #3d3320;">CPU.Socket.1</div>
<svg class="ic" style="left:761px;top:227.0px;width:20px;height:20px" viewBox="0 0 24 24" fill="none" stroke="#217a50" stroke-width="1.8" stroke-linecap="round" stroke-linejoin="round"><circle cx="12" cy="12" r="10"/><path d="m9 12 2 2 4-4"/></svg>
<div class="t" style="left:874px;top:229.0px;height:20px;line-height:20px;font-size:14px;color:#3d3320;font-family:'Liberation Sans',sans-serif;font-weight:400;">Intel</div>
<div class="t" style="left:1075px;top:229.0px;height:20px;line-height:20px;font-size:14px;color:#3d3320;font-family:'Liberation Sans',sans-serif;font-weight:400;">Intel(R) Xeon(R) Gold 5317 CPU @ 3.00GHz</div>
<div class="t" style="right:751px;top:229.0px;height:20px;line-height:20px;font-size:14px;color:#3d3320;font-family:'Liberation Sans',sans-serif;font-weight:400;">12</div>
<div class="t" style="right:548px;top:229.0px;height:20px;line-height:20px;font-size:14px;color:#3d3320;font-family:'Liberation Sans',sans-serif;font-weight:400;">24</div>
<div class="t" style="left:2029px;top:229.0px;height:20px;line-height:20px;font-size:14px;color:#3d3320;font-family:'Liberation Sans',sans-serif;font-weight:400;">Enabled</div>
<div class="t" style="right:199px;top:229.0px;height:20px;line-height:20px;font-size:14px;color:#3d3320;font-family:'Liberation Sans',sans-serif;font-weight:400;">3,000 MHz</div>
<div class="t" style="right:27px;top:229.0px;height:20px;line-height:20px;font-size:14px;color:#3d3320;font-family:'Liberation Sans',sans-serif;font-weight:400;">4,000 MHz</div>
<div class="b" style="left:1339px;top:277px;width:36px;height:36px;background:#fcfcfa;border:1px solid #e4e3df;border-radius:9px;"></div>
<svg class="ic" style="left:1349px;top:287px;width:16px;height:16px" viewBox="0 0 24 24" fill="none" stroke="#8a877d" stroke-width="1.7" stroke-linecap="round" stroke-linejoin="round"><path d="m15 18-6-6 6-6"/></svg>
<div class="t" style="left:1107.5px;width:600px;text-align:center;top:283.0px;height:24px;line-height:24px;font-size:17px;color:#3d3320;font-family:'Liberation Sans',sans-serif;font-weight:400;">1 / 1</div>
<div class="b" style="left:1441px;top:277px;width:36px;height:36px;background:#fcfcfa;border:1px solid #e4e3df;border-radius:9px;"></div>
<svg class="ic" style="left:1451px;top:287px;width:16px;height:16px" viewBox="0 0 24 24" fill="none" stroke="#8a877d" stroke-width="1.7" stroke-linecap="round" stroke-linejoin="round"><path d="m9 18 6-6-6-6"/></svg>
<div class="b" style="left:264px;top:330px;width:2288px;height:311px;background:#fcfcfa;border:1px solid #dcdbd7;border-radius:5px;box-shadow:0 1px 3px rgba(0,0,0,0.06);"></div>
<svg class="ic" style="left:273px;top:345px;width:24px;height:12px" viewBox="0 0 24 12"><path d="M1.5 0.8 H22.5 Q23.2 0.8 23.2 1.6 V4 Q21.8 4.8 23.2 5.6 V7 Q21.8 7.8 23.2 8.6 V10.4 Q23.2 11.2 22.4 11.2 H1.6 Q0.8 11.2 0.8 10.4 V8.6 Q2.2 7.8 0.8 7 V5.6 Q2.2 4.8 0.8 4 V1.6 Q0.8 0.8 1.5 0.8 Z" fill="#fff" stroke="#8a93a0" stroke-width="1.3"/><line x1="1.5" y1="10.1" x2="22.5" y2="10.1" stroke="#1f78a8" stroke-width="1.7"/></svg>
<div class="t" style="left:305px;top:338.0px;height:24px;line-height:24px;font-size:16.5px;color:#3d3320;font-family:'Liberation Sans',sans-serif;font-weight:400;">Memories</div>
<div class="t" style="right:30px;top:338.0px;height:24px;line-height:24px;font-size:16px;color:#3d3320;font-family:'Liberation Sans',sans-serif;font-weight:400;"><span class="k">총</span> <span class="k">수량</span>: 4</div>
<div class="b" style="left:273px;top:371px;width:2270px;height:210px;background:#fcfcfa;border:1px solid #dcdbd7;border-radius:5px;box-shadow:0 1px 2px rgba(0,0,0,0.05);overflow:hidden;"></div>
<div class="b" style="left:274px;top:372px;width:2268px;height:41px;background:#f1f0ee;border-bottom:1px solid #dcdbd7;border-radius:4px 4px 0 0;"></div>
<div class="t" style="right:2233px;top:381.5px;height:20px;line-height:20px;font-size:14px;color:#8f8d86;font-family:'Liberation Sans',sans-serif;font-weight:400;-webkit-text-stroke:0.35px #8f8d86;">No</div>
<div class="t" style="left:343px;top:381.5px;height:20px;line-height:20px;font-size:14px;color:#8f8d86;font-family:'Liberation Sans',sans-serif;font-weight:400;-webkit-text-stroke:0.35px #8f8d86;">Host</div>
<div class="t" style="left:508px;top:381.5px;height:20px;line-height:20px;font-size:14px;color:#8f8d86;font-family:'Liberation Sans',sans-serif;font-weight:400;-webkit-text-stroke:0.35px #8f8d86;">Id</div>
<div class="t" style="left:748px;top:381.5px;height:20px;line-height:20px;font-size:14px;color:#8f8d86;font-family:'Liberation Sans',sans-serif;font-weight:400;-webkit-text-stroke:0.35px #8f8d86;">Status</div>
<div class="t" style="left:850px;top:381.5px;height:20px;line-height:20px;font-size:14px;color:#8f8d86;font-family:'Liberation Sans',sans-serif;font-weight:400;-webkit-text-stroke:0.35px #8f8d86;">Manufacturer</div>
<div class="t" style="left:1119px;top:381.5px;height:20px;line-height:20px;font-size:14px;color:#8f8d86;font-family:'Liberation Sans',sans-serif;font-weight:400;-webkit-text-stroke:0.35px #8f8d86;">Device</div>
<div class="t" style="left:1226px;top:381.5px;height:20px;line-height:20px;font-size:14px;color:#8f8d86;font-family:'Liberation Sans',sans-serif;font-weight:400;-webkit-text-stroke:0.35px #8f8d86;">Module</div>
<div class="t" style="right:1066px;top:381.5px;height:20px;line-height:20px;font-size:14px;color:#8f8d86;font-family:'Liberation Sans',sans-serif;font-weight:400;-webkit-text-stroke:0.35px #8f8d86;">Capacity</div>
<div class="t" style="right:980px;top:381.5px;height:20px;line-height:20px;font-size:14px;color:#8f8d86;font-family:'Liberation Sans',sans-serif;font-weight:400;-webkit-text-stroke:0.35px #8f8d86;">Rank</div>
<div class="t" style="right:825px;top:381.5px;height:20px;line-height:20px;font-size:14px;color:#8f8d86;font-family:'Liberation Sans',sans-serif;font-weight:400;-webkit-text-stroke:0.35px #8f8d86;">Speed</div>
<div class="t" style="right:635px;top:381.5px;height:20px;line-height:20px;font-size:14px;color:#8f8d86;font-family:'Liberation Sans',sans-serif;font-weight:400;-webkit-text-stroke:0.35px #8f8d86;">Bus width bits</div>
<div class="t" style="right:435px;top:381.5px;height:20px;line-height:20px;font-size:14px;color:#8f8d86;font-family:'Liberation Sans',sans-serif;font-weight:400;-webkit-text-stroke:0.35px #8f8d86;">Data width bits</div>
<div class="t" style="left:2142px;top:381.5px;height:20px;line-height:20px;font-size:14px;color:#8f8d86;font-family:'Liberation Sans',sans-serif;font-weight:400;-webkit-text-stroke:0.35px #8f8d86;">Serial No.</div>
<div class="t" style="left:2279px;top:381.5px;height:20px;line-height:20px;font-size:14px;color:#8f8d86;font-family:'Liberation Sans',sans-serif;font-weight:400;-webkit-text-stroke:0.35px #8f8d86;">Part No.</div>
<div class="t" style="right:2233px;top:423.0px;height:20px;line-height:20px;font-size:14px;color:#3d3320;font-family:'Liberation Sans',sans-serif;font-weight:400;">1</div>
<div class="t" style="left:343px;top:423.5px;height:20px;line-height:20px;font-size:14px;color:#3d3320;font-family:'Liberation Mono',monospace;font-weight:400;-webkit-text-stroke:0.3px #3d3320;">ons-dev02</div>
<div class="t" style="left:508px;top:423.5px;height:20px;line-height:20px;font-size:14px;color:#3d3320;font-family:'Liberation Mono',monospace;font-weight:400;-webkit-text-stroke:0.3px #3d3320;">DIMM.Socket.A1</div>
<svg class="ic" style="left:748px;top:421.0px;width:20px;height:20px" viewBox="0 0 24 24" fill="none" stroke="#217a50" stroke-width="1.8" stroke-linecap="round" stroke-linejoin="round"><circle cx="12" cy="12" r="10"/><path d="m9 12 2 2 4-4"/></svg>
<div class="t" style="left:850px;top:423.0px;height:20px;line-height:20px;font-size:14px;color:#3d3320;font-family:'Liberation Sans',sans-serif;font-weight:400;">Hynix Semiconductor</div>
<div class="t" style="left:1119px;top:423.0px;height:20px;line-height:20px;font-size:14px;color:#3d3320;font-family:'Liberation Sans',sans-serif;font-weight:400;">DDR4</div>
<div class="t" style="left:1226px;top:423.0px;height:20px;line-height:20px;font-size:14px;color:#3d3320;font-family:'Liberation Sans',sans-serif;font-weight:400;">RDIMM</div>
<div class="t" style="right:1066px;top:423.0px;height:20px;line-height:20px;font-size:14px;color:#3d3320;font-family:'Liberation Sans',sans-serif;font-weight:400;">65,536 MHz</div>
<div class="t" style="right:980px;top:423.0px;height:20px;line-height:20px;font-size:14px;color:#3d3320;font-family:'Liberation Sans',sans-serif;font-weight:400;">2</div>
<div class="t" style="right:825px;top:423.0px;height:20px;line-height:20px;font-size:14px;color:#3d3320;font-family:'Liberation Sans',sans-serif;font-weight:400;">2,933 MHz</div>
<div class="t" style="right:635px;top:423.0px;height:20px;line-height:20px;font-size:14px;color:#3d3320;font-family:'Liberation Sans',sans-serif;font-weight:400;">72</div>
<div class="t" style="right:435px;top:423.0px;height:20px;line-height:20px;font-size:14px;color:#3d3320;font-family:'Liberation Sans',sans-serif;font-weight:400;">64</div>
<div class="t" style="left:2142px;top:423.5px;height:20px;line-height:20px;font-size:14px;color:#3d3320;font-family:'Liberation Mono',monospace;font-weight:400;-webkit-text-stroke:0.3px #3d3320;">test</div>
<div class="t" style="left:2279px;top:423.5px;height:20px;line-height:20px;font-size:14px;color:#3d3320;font-family:'Liberation Mono',monospace;font-weight:400;-webkit-text-stroke:0.3px #3d3320;">HMAA8GR7CJR4N-XN</div>
<div class="b" style="left:274px;top:454px;width:2268px;height:1px;background:#dcdbd7;"></div>
<div class="t" style="right:2233px;top:465.0px;height:20px;line-height:20px;font-size:14px;color:#3d3320;font-family:'Liberation Sans',sans-serif;font-weight:400;">2</div>
<div class="t" style="left:343px;top:465.5px;height:20px;line-height:20px;font-size:14px;color:#3d3320;font-family:'Liberation Mono',monospace;font-weight:400;-webkit-text-stroke:0.3px #3d3320;">ons-dev02</div>
<div class="t" style="left:508px;top:465.5px;height:20px;line-height:20px;font-size:14px;color:#3d3320;font-family:'Liberation Mono',monospace;font-weight:400;-webkit-text-stroke:0.3px #3d3320;">DIMM.Socket.A3</div>
<svg class="ic" style="left:748px;top:463.0px;width:20px;height:20px" viewBox="0 0 24 24" fill="none" stroke="#217a50" stroke-width="1.8" stroke-linecap="round" stroke-linejoin="round"><circle cx="12" cy="12" r="10"/><path d="m9 12 2 2 4-4"/></svg>
<div class="t" style="left:850px;top:465.0px;height:20px;line-height:20px;font-size:14px;color:#3d3320;font-family:'Liberation Sans',sans-serif;font-weight:400;">Hynix Semiconductor</div>
<div class="t" style="left:1119px;top:465.0px;height:20px;line-height:20px;font-size:14px;color:#3d3320;font-family:'Liberation Sans',sans-serif;font-weight:400;">DDR4</div>
<div class="t" style="left:1226px;top:465.0px;height:20px;line-height:20px;font-size:14px;color:#3d3320;font-family:'Liberation Sans',sans-serif;font-weight:400;">RDIMM</div>
<div class="t" style="right:1066px;top:465.0px;height:20px;line-height:20px;font-size:14px;color:#3d3320;font-family:'Liberation Sans',sans-serif;font-weight:400;">65,536 MHz</div>
<div class="t" style="right:980px;top:465.0px;height:20px;line-height:20px;font-size:14px;color:#3d3320;font-family:'Liberation Sans',sans-serif;font-weight:400;">2</div>
<div class="t" style="right:825px;top:465.0px;height:20px;line-height:20px;font-size:14px;color:#3d3320;font-family:'Liberation Sans',sans-serif;font-weight:400;">2,933 MHz</div>
<div class="t" style="right:635px;top:465.0px;height:20px;line-height:20px;font-size:14px;color:#3d3320;font-family:'Liberation Sans',sans-serif;font-weight:400;">72</div>
<div class="t" style="right:435px;top:465.0px;height:20px;line-height:20px;font-size:14px;color:#3d3320;font-family:'Liberation Sans',sans-serif;font-weight:400;">64</div>
<div class="t" style="left:2142px;top:465.5px;height:20px;line-height:20px;font-size:14px;color:#3d3320;font-family:'Liberation Mono',monospace;font-weight:400;-webkit-text-stroke:0.3px #3d3320;">test</div>
<div class="t" style="left:2279px;top:465.5px;height:20px;line-height:20px;font-size:14px;color:#3d3320;font-family:'Liberation Mono',monospace;font-weight:400;-webkit-text-stroke:0.3px #3d3320;">HMAA8GR7CJR4N-XN</div>
<div class="b" style="left:274px;top:496px;width:2268px;height:1px;background:#dcdbd7;"></div>
<div class="t" style="right:2233px;top:507.0px;height:20px;line-height:20px;font-size:14px;color:#3d3320;font-family:'Liberation Sans',sans-serif;font-weight:400;">3</div>
<div class="t" style="left:343px;top:507.5px;height:20px;line-height:20px;font-size:14px;color:#3d3320;font-family:'Liberation Mono',monospace;font-weight:400;-webkit-text-stroke:0.3px #3d3320;">ons-dev02</div>
<div class="t" style="left:508px;top:507.5px;height:20px;line-height:20px;font-size:14px;color:#3d3320;font-family:'Liberation Mono',monospace;font-weight:400;-webkit-text-stroke:0.3px #3d3320;">DIMM.Socket.A2</div>
<svg class="ic" style="left:748px;top:505.0px;width:20px;height:20px" viewBox="0 0 24 24" fill="none" stroke="#217a50" stroke-width="1.8" stroke-linecap="round" stroke-linejoin="round"><circle cx="12" cy="12" r="10"/><path d="m9 12 2 2 4-4"/></svg>
<div class="t" style="left:850px;top:507.0px;height:20px;line-height:20px;font-size:14px;color:#3d3320;font-family:'Liberation Sans',sans-serif;font-weight:400;">Hynix Semiconductor</div>
<div class="t" style="left:1119px;top:507.0px;height:20px;line-height:20px;font-size:14px;color:#3d3320;font-family:'Liberation Sans',sans-serif;font-weight:400;">DDR4</div>
<div class="t" style="left:1226px;top:507.0px;height:20px;line-height:20px;font-size:14px;color:#3d3320;font-family:'Liberation Sans',sans-serif;font-weight:400;">RDIMM</div>
<div class="t" style="right:1066px;top:507.0px;height:20px;line-height:20px;font-size:14px;color:#3d3320;font-family:'Liberation Sans',sans-serif;font-weight:400;">65,536 MHz</div>
<div class="t" style="right:980px;top:507.0px;height:20px;line-height:20px;font-size:14px;color:#3d3320;font-family:'Liberation Sans',sans-serif;font-weight:400;">2</div>
<div class="t" style="right:825px;top:507.0px;height:20px;line-height:20px;font-size:14px;color:#3d3320;font-family:'Liberation Sans',sans-serif;font-weight:400;">2,933 MHz</div>
<div class="t" style="right:635px;top:507.0px;height:20px;line-height:20px;font-size:14px;color:#3d3320;font-family:'Liberation Sans',sans-serif;font-weight:400;">72</div>
<div class="t" style="right:435px;top:507.0px;height:20px;line-height:20px;font-size:14px;color:#3d3320;font-family:'Liberation Sans',sans-serif;font-weight:400;">64</div>
<div class="t" style="left:2142px;top:507.5px;height:20px;line-height:20px;font-size:14px;color:#3d3320;font-family:'Liberation Mono',monospace;font-weight:400;-webkit-text-stroke:0.3px #3d3320;">test</div>
<div class="t" style="left:2279px;top:507.5px;height:20px;line-height:20px;font-size:14px;color:#3d3320;font-family:'Liberation Mono',monospace;font-weight:400;-webkit-text-stroke:0.3px #3d3320;">HMAA8GR7CJR4N-XN</div>
<div class="b" style="left:274px;top:538px;width:2268px;height:1px;background:#dcdbd7;"></div>
<div class="t" style="right:2233px;top:549.0px;height:20px;line-height:20px;font-size:14px;color:#3d3320;font-family:'Liberation Sans',sans-serif;font-weight:400;">4</div>
<div class="t" style="left:343px;top:549.5px;height:20px;line-height:20px;font-size:14px;color:#3d3320;font-family:'Liberation Mono',monospace;font-weight:400;-webkit-text-stroke:0.3px #3d3320;">ons-dev02</div>
<div class="t" style="left:508px;top:549.5px;height:20px;line-height:20px;font-size:14px;color:#3d3320;font-family:'Liberation Mono',monospace;font-weight:400;-webkit-text-stroke:0.3px #3d3320;">DIMM.Socket.A4</div>
<svg class="ic" style="left:748px;top:547.0px;width:20px;height:20px" viewBox="0 0 24 24" fill="none" stroke="#217a50" stroke-width="1.8" stroke-linecap="round" stroke-linejoin="round"><circle cx="12" cy="12" r="10"/><path d="m9 12 2 2 4-4"/></svg>
<div class="t" style="left:850px;top:549.0px;height:20px;line-height:20px;font-size:14px;color:#3d3320;font-family:'Liberation Sans',sans-serif;font-weight:400;">Hynix Semiconductor</div>
<div class="t" style="left:1119px;top:549.0px;height:20px;line-height:20px;font-size:14px;color:#3d3320;font-family:'Liberation Sans',sans-serif;font-weight:400;">DDR4</div>
<div class="t" style="left:1226px;top:549.0px;height:20px;line-height:20px;font-size:14px;color:#3d3320;font-family:'Liberation Sans',sans-serif;font-weight:400;">RDIMM</div>
<div class="t" style="right:1066px;top:549.0px;height:20px;line-height:20px;font-size:14px;color:#3d3320;font-family:'Liberation Sans',sans-serif;font-weight:400;">65,536 MHz</div>
<div class="t" style="right:980px;top:549.0px;height:20px;line-height:20px;font-size:14px;color:#3d3320;font-family:'Liberation Sans',sans-serif;font-weight:400;">2</div>
<div class="t" style="right:825px;top:549.0px;height:20px;line-height:20px;font-size:14px;color:#3d3320;font-family:'Liberation Sans',sans-serif;font-weight:400;">2,933 MHz</div>
<div class="t" style="right:635px;top:549.0px;height:20px;line-height:20px;font-size:14px;color:#3d3320;font-family:'Liberation Sans',sans-serif;font-weight:400;">72</div>
<div class="t" style="right:435px;top:549.0px;height:20px;line-height:20px;font-size:14px;color:#3d3320;font-family:'Liberation Sans',sans-serif;font-weight:400;">64</div>
<div class="t" style="left:2142px;top:549.5px;height:20px;line-height:20px;font-size:14px;color:#3d3320;font-family:'Liberation Mono',monospace;font-weight:400;-webkit-text-stroke:0.3px #3d3320;">test</div>
<div class="t" style="left:2279px;top:549.5px;height:20px;line-height:20px;font-size:14px;color:#3d3320;font-family:'Liberation Mono',monospace;font-weight:400;-webkit-text-stroke:0.3px #3d3320;">HMAA8GR7CJR4N-XN</div>
<div class="b" style="left:1339px;top:597px;width:36px;height:36px;background:#fcfcfa;border:1px solid #e4e3df;border-radius:9px;"></div>
<svg class="ic" style="left:1349px;top:607px;width:16px;height:16px" viewBox="0 0 24 24" fill="none" stroke="#8a877d" stroke-width="1.7" stroke-linecap="round" stroke-linejoin="round"><path d="m15 18-6-6 6-6"/></svg>
<div class="t" style="left:1107.5px;width:600px;text-align:center;top:603.0px;height:24px;line-height:24px;font-size:17px;color:#3d3320;font-family:'Liberation Sans',sans-serif;font-weight:400;">1 / 1</div>
<div class="b" style="left:1441px;top:597px;width:36px;height:36px;background:#fcfcfa;border:1px solid #e4e3df;border-radius:9px;"></div>
<svg class="ic" style="left:1451px;top:607px;width:16px;height:16px" viewBox="0 0 24 24" fill="none" stroke="#8a877d" stroke-width="1.7" stroke-linecap="round" stroke-linejoin="round"><path d="m9 18 6-6-6-6"/></svg>
<div class="b" style="left:264px;top:649px;width:2288px;height:270px;background:#fcfcfa;border:1px solid #dcdbd7;border-radius:5px;box-shadow:0 1px 3px rgba(0,0,0,0.06);"></div>
<svg class="ic" style="left:274px;top:657px;width:22px;height:24px" viewBox="0 0 22 24" fill="#fff" stroke="#4b5563" stroke-width="1.3"><path d="M1.5 4.7 C1.5 1.2 20.5 1.2 20.5 4.7 V20.3 C20.5 24 1.5 24 1.5 20.3 Z"/><path d="M1.5 4.7 C1.5 8.2 20.5 8.2 20.5 4.7" fill="none"/><path d="M1.5 9.8 C1.5 13.3 20.5 13.3 20.5 9.8" fill="none"/><path d="M1.5 14.9 C1.5 18.4 20.5 18.4 20.5 14.9" fill="none"/><circle cx="11" cy="10.3" r="0.9" fill="#5ab4e6" stroke="none"/><circle cx="11" cy="15.6" r="0.9" fill="#5ab4e6" stroke="none"/><circle cx="11" cy="20.8" r="0.9" fill="#5ab4e6" stroke="none"/></svg>
<div class="t" style="left:305px;top:657.0px;height:24px;line-height:24px;font-size:16.5px;color:#3d3320;font-family:'Liberation Sans',sans-serif;font-weight:400;">Storages</div>
<div class="t" style="right:30px;top:657.0px;height:24px;line-height:24px;font-size:16px;color:#3d3320;font-family:'Liberation Sans',sans-serif;font-weight:400;"><span class="k">총</span> <span class="k">수량</span>: 3</div>
<div class="b" style="left:273px;top:690px;width:2270px;height:168px;background:#fcfcfa;border:1px solid #dcdbd7;border-radius:5px;box-shadow:0 1px 2px rgba(0,0,0,0.05);overflow:hidden;"></div>
<div class="b" style="left:274px;top:691px;width:2268px;height:41px;background:#f1f0ee;border-bottom:1px solid #dcdbd7;border-radius:4px 4px 0 0;"></div>
<div class="t" style="left:368px;top:700.5px;height:20px;line-height:20px;font-size:14px;color:#8f8d86;font-family:'Liberation Sans',sans-serif;font-weight:400;-webkit-text-stroke:0.35px #8f8d86;">Host</div>
<div class="t" style="right:1937px;top:700.5px;height:20px;line-height:20px;font-size:14px;color:#8f8d86;font-family:'Liberation Sans',sans-serif;font-weight:400;-webkit-text-stroke:0.35px #8f8d86;">No</div>
<div class="t" style="left:639.5px;top:700.5px;height:20px;line-height:20px;font-size:14px;color:#8f8d86;font-family:'Liberation Sans',sans-serif;font-weight:400;-webkit-text-stroke:0.35px #8f8d86;">Id</div>
<div class="t" style="left:982.5px;top:700.5px;height:20px;line-height:20px;font-size:14px;color:#8f8d86;font-family:'Liberation Sans',sans-serif;font-weight:400;-webkit-text-stroke:0.35px #8f8d86;">Name</div>
<div class="t" style="left:1808.5px;top:700.5px;height:20px;line-height:20px;font-size:14px;color:#8f8d86;font-family:'Liberation Sans',sans-serif;font-weight:400;-webkit-text-stroke:0.35px #8f8d86;">Status</div>
<div class="t" style="left:1931.5px;top:700.5px;height:20px;line-height:20px;font-size:14px;color:#8f8d86;font-family:'Liberation Sans',sans-serif;font-weight:400;-webkit-text-stroke:0.35px #8f8d86;">Description</div>
<div class="t" style="right:184.5px;top:700.5px;height:20px;line-height:20px;font-size:14px;color:#8f8d86;font-family:'Liberation Sans',sans-serif;font-weight:400;-webkit-text-stroke:0.35px #8f8d86;">Drives</div>
<div class="t" style="right:27px;top:700.5px;height:20px;line-height:20px;font-size:14px;color:#8f8d86;font-family:'Liberation Sans',sans-serif;font-weight:400;-webkit-text-stroke:0.35px #8f8d86;">Storages</div>
<div class="b" style="left:282px;top:741.0px;width:24px;height:24px;background:#fcfcfa;border:1px solid #dddcd8;border-radius:6px;box-shadow:0 1px 1px rgba(0,0,0,0.05);"></div>
<svg class="ic" style="left:286px;top:744.5px;width:16px;height:16px" viewBox="0 0 24 24" fill="none" stroke="#333" stroke-width="1.8" stroke-linecap="round" stroke-linejoin="round"><path d="m9 18 6-6-6-6"/></svg>
<div class="t" style="left:368px;top:742.5px;height:20px;line-height:20px;font-size:14px;color:#3d3320;font-family:'Liberation Mono',monospace;font-weight:400;-webkit-text-stroke:0.3px #3d3320;">ons-dev02</div>
<div class="t" style="right:1937px;top:742.0px;height:20px;line-height:20px;font-size:14px;color:#3d3320;font-family:'Liberation Sans',sans-serif;font-weight:400;">1</div>
<div class="t" style="left:639.5px;top:742.5px;height:20px;line-height:20px;font-size:14px;color:#3d3320;font-family:'Liberation Mono',monospace;font-weight:400;-webkit-text-stroke:0.3px #3d3320;">RAID.SL.3-1</div>
<div class="t" style="left:982.5px;top:742.0px;height:20px;line-height:20px;font-size:14px;color:#3d3320;font-family:'Liberation Sans',sans-serif;font-weight:400;">PERC H755 Front</div>
<svg class="ic" style="left:1808.5px;top:740.0px;width:20px;height:20px" viewBox="0 0 24 24" fill="none" stroke="#217a50" stroke-width="1.8" stroke-linecap="round" stroke-linejoin="round"><circle cx="12" cy="12" r="10"/><path d="m9 12 2 2 4-4"/></svg>
<div class="t" style="left:1931.5px;top:742.0px;height:20px;line-height:20px;font-size:14px;color:#3d3320;font-family:'Liberation Sans',sans-serif;font-weight:400;">RAID Controller in SL 3</div>
<div class="t" style="right:184.5px;top:742.0px;height:20px;line-height:20px;font-size:14px;color:#3d3320;font-family:'Liberation Sans',sans-serif;font-weight:400;">2</div>
<div class="t" style="right:27px;top:742.0px;height:20px;line-height:20px;font-size:14px;color:#3d3320;font-family:'Liberation Sans',sans-serif;font-weight:400;">1</div>
<div class="b" style="left:274px;top:773px;width:2268px;height:1px;background:#dcdbd7;"></div>
<div class="b" style="left:282px;top:783.0px;width:24px;height:24px;background:#fcfcfa;border:1px solid #dddcd8;border-radius:6px;box-shadow:0 1px 1px rgba(0,0,0,0.05);"></div>
<svg class="ic" style="left:286px;top:786.5px;width:16px;height:16px" viewBox="0 0 24 24" fill="none" stroke="#333" stroke-width="1.8" stroke-linecap="round" stroke-linejoin="round"><path d="m9 18 6-6-6-6"/></svg>
<div class="t" style="left:368px;top:784.5px;height:20px;line-height:20px;font-size:14px;color:#3d3320;font-family:'Liberation Mono',monospace;font-weight:400;-webkit-text-stroke:0.3px #3d3320;">ons-dev02</div>
<div class="t" style="right:1937px;top:784.0px;height:20px;line-height:20px;font-size:14px;color:#3d3320;font-family:'Liberation Sans',sans-serif;font-weight:400;">2</div>
<div class="t" style="left:639.5px;top:784.5px;height:20px;line-height:20px;font-size:14px;color:#3d3320;font-family:'Liberation Mono',monospace;font-weight:400;-webkit-text-stroke:0.3px #3d3320;">AHCI.Embedded.2-1</div>
<div class="t" style="left:982.5px;top:784.0px;height:20px;line-height:20px;font-size:14px;color:#3d3320;font-family:'Liberation Sans',sans-serif;font-weight:400;">C620 Series Chipset Family SATA Controller [AHCI mode]</div>
<svg class="ic" style="left:1808.5px;top:782.0px;width:20px;height:20px" viewBox="0 0 24 24" fill="none" stroke="#555" stroke-width="1.8" stroke-linecap="round" stroke-linejoin="round"><circle cx="12" cy="12" r="10"/><path d="M9.09 9a3 3 0 0 1 5.83 1c0 2-3 3-3 3"/><path d="M12 17h.01"/></svg>
<div class="t" style="left:1931.5px;top:784.0px;height:20px;line-height:20px;font-size:14px;color:#3d3320;font-family:'Liberation Sans',sans-serif;font-weight:400;">Embedded AHCI 2</div>
<div class="t" style="right:184.5px;top:784.0px;height:20px;line-height:20px;font-size:14px;color:#3d3320;font-family:'Liberation Sans',sans-serif;font-weight:400;">0</div>
<div class="t" style="right:27px;top:784.0px;height:20px;line-height:20px;font-size:14px;color:#3d3320;font-family:'Liberation Sans',sans-serif;font-weight:400;">1</div>
<div class="b" style="left:274px;top:815px;width:2268px;height:1px;background:#dcdbd7;"></div>
<div class="b" style="left:282px;top:825.0px;width:24px;height:24px;background:#fcfcfa;border:1px solid #dddcd8;border-radius:6px;box-shadow:0 1px 1px rgba(0,0,0,0.05);"></div>
<svg class="ic" style="left:286px;top:828.5px;width:16px;height:16px" viewBox="0 0 24 24" fill="none" stroke="#333" stroke-width="1.8" stroke-linecap="round" stroke-linejoin="round"><path d="m9 18 6-6-6-6"/></svg>
<div class="t" style="left:368px;top:826.5px;height:20px;line-height:20px;font-size:14px;color:#3d3320;font-family:'Liberation Mono',monospace;font-weight:400;-webkit-text-stroke:0.3px #3d3320;">ons-dev02</div>
<div class="t" style="right:1937px;top:826.0px;height:20px;line-height:20px;font-size:14px;color:#3d3320;font-family:'Liberation Sans',sans-serif;font-weight:400;">3</div>
<div class="t" style="left:639.5px;top:826.5px;height:20px;line-height:20px;font-size:14px;color:#3d3320;font-family:'Liberation Mono',monospace;font-weight:400;-webkit-text-stroke:0.3px #3d3320;">AHCI.Embedded.1-1</div>
<div class="t" style="left:982.5px;top:826.0px;height:20px;line-height:20px;font-size:14px;color:#3d3320;font-family:'Liberation Sans',sans-serif;font-weight:400;">C620 Series Chipset Family SSATA Controller [AHCI mode]</div>
<svg class="ic" style="left:1808.5px;top:824.0px;width:20px;height:20px" viewBox="0 0 24 24" fill="none" stroke="#555" stroke-width="1.8" stroke-linecap="round" stroke-linejoin="round"><circle cx="12" cy="12" r="10"/><path d="M9.09 9a3 3 0 0 1 5.83 1c0 2-3 3-3 3"/><path d="M12 17h.01"/></svg>
<div class="t" style="left:1931.5px;top:826.0px;height:20px;line-height:20px;font-size:14px;color:#3d3320;font-family:'Liberation Sans',sans-serif;font-weight:400;">Embedded AHCI 1</div>
<div class="t" style="right:184.5px;top:826.0px;height:20px;line-height:20px;font-size:14px;color:#3d3320;font-family:'Liberation Sans',sans-serif;font-weight:400;">0</div>
<div class="t" style="right:27px;top:826.0px;height:20px;line-height:20px;font-size:14px;color:#3d3320;font-family:'Liberation Sans',sans-serif;font-weight:400;">1</div>
<div class="b" style="left:1339px;top:874px;width:36px;height:36px;background:#fcfcfa;border:1px solid #e4e3df;border-radius:9px;"></div>
<svg class="ic" style="left:1349px;top:884px;width:16px;height:16px" viewBox="0 0 24 24" fill="none" stroke="#8a877d" stroke-width="1.7" stroke-linecap="round" stroke-linejoin="round"><path d="m15 18-6-6 6-6"/></svg>
<div class="t" style="left:1107.5px;width:600px;text-align:center;top:880.0px;height:24px;line-height:24px;font-size:17px;color:#3d3320;font-family:'Liberation Sans',sans-serif;font-weight:400;">1 / 1</div>
<div class="b" style="left:1441px;top:874px;width:36px;height:36px;background:#fcfcfa;border:1px solid #e4e3df;border-radius:9px;"></div>
<svg class="ic" style="left:1451px;top:884px;width:16px;height:16px" viewBox="0 0 24 24" fill="none" stroke="#8a877d" stroke-width="1.7" stroke-linecap="round" stroke-linejoin="round"><path d="m9 18 6-6-6-6"/></svg>
<div class="b" style="left:264px;top:927px;width:2288px;height:185px;background:#fcfcfa;border:1px solid #dcdbd7;border-radius:5px;box-shadow:0 1px 3px rgba(0,0,0,0.06);"></div>
<svg class="ic" style="left:274px;top:935px;width:22px;height:24px" viewBox="0 0 22 24" fill="#fff" stroke="#4b5563" stroke-width="1.3"><path d="M1.5 4.7 C1.5 1.2 20.5 1.2 20.5 4.7 V20.3 C20.5 24 1.5 24 1.5 20.3 Z"/><path d="M1.5 4.7 C1.5 8.2 20.5 8.2 20.5 4.7" fill="none"/><path d="M1.5 9.8 C1.5 13.3 20.5 13.3 20.5 9.8" fill="none"/><path d="M1.5 14.9 C1.5 18.4 20.5 18.4 20.5 14.9" fill="none"/><circle cx="11" cy="10.3" r="0.9" fill="#5ab4e6" stroke="none"/><circle cx="11" cy="15.6" r="0.9" fill="#5ab4e6" stroke="none"/><circle cx="11" cy="20.8" r="0.9" fill="#5ab4e6" stroke="none"/></svg>
<div class="t" style="left:305px;top:935.0px;height:24px;line-height:24px;font-size:16.5px;color:#3d3320;font-family:'Liberation Sans',sans-serif;font-weight:400;">Volumes</div>
<div class="t" style="right:30px;top:935.0px;height:24px;line-height:24px;font-size:16px;color:#3d3320;font-family:'Liberation Sans',sans-serif;font-weight:400;"><span class="k">총</span> <span class="k">수량</span>: 1</div>
<div class="b" style="left:273px;top:968px;width:2270px;height:84px;background:#fcfcfa;border:1px solid #dcdbd7;border-radius:5px;box-shadow:0 1px 2px rgba(0,0,0,0.05);overflow:hidden;"></div>
<div class="b" style="left:274px;top:969px;width:2268px;height:41px;background:#f1f0ee;border-bottom:1px solid #dcdbd7;border-radius:4px 4px 0 0;"></div>
<div class="t" style="right:2213px;top:978.5px;height:20px;line-height:20px;font-size:14px;color:#8f8d86;font-family:'Liberation Sans',sans-serif;font-weight:400;-webkit-text-stroke:0.35px #8f8d86;">No</div>
<div class="t" style="left:363.5px;top:978.5px;height:20px;line-height:20px;font-size:14px;color:#8f8d86;font-family:'Liberation Sans',sans-serif;font-weight:400;-webkit-text-stroke:0.35px #8f8d86;">Host</div>
<div class="t" style="left:584px;top:978.5px;height:20px;line-height:20px;font-size:14px;color:#8f8d86;font-family:'Liberation Sans',sans-serif;font-weight:400;-webkit-text-stroke:0.35px #8f8d86;">Id</div>
<div class="t" style="left:1189.5px;top:978.5px;height:20px;line-height:20px;font-size:14px;color:#8f8d86;font-family:'Liberation Sans',sans-serif;font-weight:400;-webkit-text-stroke:0.35px #8f8d86;">Status</div>
<div class="t" style="left:1326.5px;top:978.5px;height:20px;line-height:20px;font-size:14px;color:#8f8d86;font-family:'Liberation Sans',sans-serif;font-weight:400;-webkit-text-stroke:0.35px #8f8d86;">RaidType</div>
<div class="t" style="left:1507px;top:978.5px;height:20px;line-height:20px;font-size:14px;color:#8f8d86;font-family:'Liberation Sans',sans-serif;font-weight:400;-webkit-text-stroke:0.35px #8f8d86;">Description</div>
<div class="t" style="right:221px;top:978.5px;height:20px;line-height:20px;font-size:14px;color:#8f8d86;font-family:'Liberation Sans',sans-serif;font-weight:400;-webkit-text-stroke:0.35px #8f8d86;">Capacity</div>
<div class="t" style="right:27px;top:978.5px;height:20px;line-height:20px;font-size:14px;color:#8f8d86;font-family:'Liberation Sans',sans-serif;font-weight:400;-webkit-text-stroke:0.35px #8f8d86;">Block Size</div>
<div class="t" style="right:2213px;top:1020.0px;height:20px;line-height:20px;font-size:14px;color:#3d3320;font-family:'Liberation Sans',sans-serif;font-weight:400;">1</div>
<div class="t" style="left:363.5px;top:1020.5px;height:20px;line-height:20px;font-size:14px;color:#3d3320;font-family:'Liberation Mono',monospace;font-weight:400;-webkit-text-stroke:0.3px #3d3320;">ons-dev02</div>
<div class="t" style="left:584px;top:1020.5px;height:20px;line-height:20px;font-size:14px;color:#3d3320;font-family:'Liberation Mono',monospace;font-weight:400;-webkit-text-stroke:0.3px #3d3320;">Disk.Virtual.238:RAID.SL.3-1</div>
<svg class="ic" style="left:1189.5px;top:1018.0px;width:20px;height:20px" viewBox="0 0 24 24" fill="none" stroke="#217a50" stroke-width="1.8" stroke-linecap="round" stroke-linejoin="round"><circle cx="12" cy="12" r="10"/><path d="m9 12 2 2 4-4"/></svg>
<div class="t" style="left:1326.5px;top:1020.0px;height:20px;line-height:20px;font-size:14px;color:#3d3320;font-family:'Liberation Sans',sans-serif;font-weight:400;">RAID0</div>
<div class="t" style="left:1507px;top:1020.0px;height:20px;line-height:20px;font-size:14px;color:#3d3320;font-family:'Liberation Sans',sans-serif;font-weight:400;">Virtual Disk 238 on RAID Controller in SL 3</div>
<div class="t" style="right:221px;top:1020.0px;height:20px;line-height:20px;font-size:14px;color:#3d3320;font-family:'Liberation Sans',sans-serif;font-weight:400;">3.49 TiB</div>
<div class="t" style="right:27px;top:1020.0px;height:20px;line-height:20px;font-size:14px;color:#3d3320;font-family:'Liberation Sans',sans-serif;font-weight:400;">512 B</div>
<div class="b" style="left:1339px;top:1068px;width:36px;height:36px;background:#fcfcfa;border:1px solid #e4e3df;border-radius:9px;"></div>
<svg class="ic" style="left:1349px;top:1078px;width:16px;height:16px" viewBox="0 0 24 24" fill="none" stroke="#8a877d" stroke-width="1.7" stroke-linecap="round" stroke-linejoin="round"><path d="m15 18-6-6 6-6"/></svg>
<div class="t" style="left:1107.5px;width:600px;text-align:center;top:1074.0px;height:24px;line-height:24px;font-size:17px;color:#3d3320;font-family:'Liberation Sans',sans-serif;font-weight:400;">1 / 1</div>
<div class="b" style="left:1441px;top:1068px;width:36px;height:36px;background:#fcfcfa;border:1px solid #e4e3df;border-radius:9px;"></div>
<svg class="ic" style="left:1451px;top:1078px;width:16px;height:16px" viewBox="0 0 24 24" fill="none" stroke="#8a877d" stroke-width="1.7" stroke-linecap="round" stroke-linejoin="round"><path d="m9 18 6-6-6-6"/></svg>
<div class="b" style="left:264px;top:1120px;width:2288px;height:270px;background:#fcfcfa;border:1px solid #dcdbd7;border-radius:5px;box-shadow:0 1px 3px rgba(0,0,0,0.06);"></div>
<svg class="ic" style="left:274px;top:1128px;width:22px;height:24px" viewBox="0 0 22 24" fill="#fff" stroke="#4b5563" stroke-width="1.3"><path d="M1.5 4.7 C1.5 1.2 20.5 1.2 20.5 4.7 V20.3 C20.5 24 1.5 24 1.5 20.3 Z"/><path d="M1.5 4.7 C1.5 8.2 20.5 8.2 20.5 4.7" fill="none"/><path d="M1.5 9.8 C1.5 13.3 20.5 13.3 20.5 9.8" fill="none"/><path d="M1.5 14.9 C1.5 18.4 20.5 18.4 20.5 14.9" fill="none"/><circle cx="11" cy="10.3" r="0.9" fill="#5ab4e6" stroke="none"/><circle cx="11" cy="15.6" r="0.9" fill="#5ab4e6" stroke="none"/><circle cx="11" cy="20.8" r="0.9" fill="#5ab4e6" stroke="none"/></svg>
<div class="t" style="left:305px;top:1128.0px;height:24px;line-height:24px;font-size:16.5px;color:#3d3320;font-family:'Liberation Sans',sans-serif;font-weight:400;">Disks</div>
<div class="t" style="right:30px;top:1128.0px;height:24px;line-height:24px;font-size:16px;color:#3d3320;font-family:'Liberation Sans',sans-serif;font-weight:400;"><span class="k">총</span> <span class="k">수량</span>: 2</div>
<div class="b" style="left:273px;top:1161px;width:2270px;height:126px;background:#fcfcfa;border:1px solid #dcdbd7;border-radius:5px;box-shadow:0 1px 2px rgba(0,0,0,0.05);overflow:hidden;"></div>
<div class="b" style="left:274px;top:1162px;width:2268px;height:41px;background:#f1f0ee;border-bottom:1px solid #dcdbd7;border-radius:4px 4px 0 0;"></div>
<div class="t" style="right:2241px;top:1171.5px;height:20px;line-height:20px;font-size:14px;color:#8f8d86;font-family:'Liberation Sans',sans-serif;font-weight:400;-webkit-text-stroke:0.35px #8f8d86;">No</div>
<div class="t" style="left:336px;top:1171.5px;height:20px;line-height:20px;font-size:14px;color:#8f8d86;font-family:'Liberation Sans',sans-serif;font-weight:400;-webkit-text-stroke:0.35px #8f8d86;">Host</div>
<div class="t" style="left:481.5px;top:1171.5px;height:20px;line-height:20px;font-size:14px;color:#8f8d86;font-family:'Liberation Sans',sans-serif;font-weight:400;-webkit-text-stroke:0.35px #8f8d86;">Id</div>
<div class="t" style="left:1107px;top:1171.5px;height:20px;line-height:20px;font-size:14px;color:#8f8d86;font-family:'Liberation Sans',sans-serif;font-weight:400;-webkit-text-stroke:0.35px #8f8d86;">Status</div>
<div class="t" style="left:1197px;top:1171.5px;height:20px;line-height:20px;font-size:14px;color:#8f8d86;font-family:'Liberation Sans',sans-serif;font-weight:400;-webkit-text-stroke:0.35px #8f8d86;">Description</div>
<div class="t" style="right:772px;top:1171.5px;height:20px;line-height:20px;font-size:14px;color:#8f8d86;font-family:'Liberation Sans',sans-serif;font-weight:400;-webkit-text-stroke:0.35px #8f8d86;">Capacity</div>
<div class="t" style="right:643.5px;top:1171.5px;height:20px;line-height:20px;font-size:14px;color:#8f8d86;font-family:'Liberation Sans',sans-serif;font-weight:400;-webkit-text-stroke:0.35px #8f8d86;">Block Size</div>
<div class="t" style="right:547px;top:1171.5px;height:20px;line-height:20px;font-size:14px;color:#8f8d86;font-family:'Liberation Sans',sans-serif;font-weight:400;-webkit-text-stroke:0.35px #8f8d86;">Speed</div>
<div class="t" style="left:2030px;top:1171.5px;height:20px;line-height:20px;font-size:14px;color:#8f8d86;font-family:'Liberation Sans',sans-serif;font-weight:400;-webkit-text-stroke:0.35px #8f8d86;">Serial No.</div>
<div class="t" style="left:2151px;top:1171.5px;height:20px;line-height:20px;font-size:14px;color:#8f8d86;font-family:'Liberation Sans',sans-serif;font-weight:400;-webkit-text-stroke:0.35px #8f8d86;">Part No.</div>
<div class="t" style="right:2241px;top:1213.0px;height:20px;line-height:20px;font-size:14px;color:#3d3320;font-family:'Liberation Sans',sans-serif;font-weight:400;">1</div>
<div class="t" style="left:336px;top:1213.5px;height:20px;line-height:20px;font-size:14px;color:#3d3320;font-family:'Liberation Mono',monospace;font-weight:400;-webkit-text-stroke:0.3px #3d3320;">ons-dev02</div>
<div class="t" style="left:481.5px;top:1213.5px;height:20px;line-height:20px;font-size:14px;color:#3d3320;font-family:'Liberation Mono',monospace;font-weight:400;-webkit-text-stroke:0.3px #3d3320;">Disk.Bay.0:Enclosure.Internal.0-1:RAID.SL.3-1</div>
<svg class="ic" style="left:1107px;top:1211.0px;width:20px;height:20px" viewBox="0 0 24 24" fill="none" stroke="#217a50" stroke-width="1.8" stroke-linecap="round" stroke-linejoin="round"><circle cx="12" cy="12" r="10"/><path d="m9 12 2 2 4-4"/></svg>
<div class="t" style="left:1197px;top:1213.0px;height:20px;line-height:20px;font-size:14px;color:#3d3320;font-family:'Liberation Sans',sans-serif;font-weight:400;">Disk 0 in Backplane 1 of RAID Controller in SL 3</div>
<div class="t" style="right:772px;top:1213.0px;height:20px;line-height:20px;font-size:14px;color:#3d3320;font-family:'Liberation Sans',sans-serif;font-weight:400;">1.75 TiB</div>
<div class="t" style="right:643.5px;top:1213.0px;height:20px;line-height:20px;font-size:14px;color:#3d3320;font-family:'Liberation Sans',sans-serif;font-weight:400;">512 B</div>
<div class="t" style="right:547px;top:1213.0px;height:20px;line-height:20px;font-size:14px;color:#3d3320;font-family:'Liberation Sans',sans-serif;font-weight:400;">6 Gbps</div>
<div class="t" style="left:2030px;top:1213.5px;height:20px;line-height:20px;font-size:14px;color:#3d3320;font-family:'Liberation Mono',monospace;font-weight:400;-webkit-text-stroke:0.3px #3d3320;">test</div>
<div class="t" style="left:2151px;top:1213.5px;height:20px;line-height:20px;font-size:14px;color:#3d3320;font-family:'Liberation Mono',monospace;font-weight:400;-webkit-text-stroke:0.3px #3d3320;">KR-0GKTF1-SK500-29D-05XJ-A02</div>
<div class="b" style="left:274px;top:1244px;width:2268px;height:1px;background:#dcdbd7;"></div>
<div class="t" style="right:2241px;top:1255.0px;height:20px;line-height:20px;font-size:14px;color:#3d3320;font-family:'Liberation Sans',sans-serif;font-weight:400;">2</div>
<div class="t" style="left:336px;top:1255.5px;height:20px;line-height:20px;font-size:14px;color:#3d3320;font-family:'Liberation Mono',monospace;font-weight:400;-webkit-text-stroke:0.3px #3d3320;">ons-dev02</div>
<div class="t" style="left:481.5px;top:1255.5px;height:20px;line-height:20px;font-size:14px;color:#3d3320;font-family:'Liberation Mono',monospace;font-weight:400;-webkit-text-stroke:0.3px #3d3320;">Disk.Bay.1:Enclosure.Internal.0-1:RAID.SL.3-1</div>
<svg class="ic" style="left:1107px;top:1253.0px;width:20px;height:20px" viewBox="0 0 24 24" fill="none" stroke="#217a50" stroke-width="1.8" stroke-linecap="round" stroke-linejoin="round"><circle cx="12" cy="12" r="10"/><path d="m9 12 2 2 4-4"/></svg>
<div class="t" style="left:1197px;top:1255.0px;height:20px;line-height:20px;font-size:14px;color:#3d3320;font-family:'Liberation Sans',sans-serif;font-weight:400;">Disk 1 in Backplane 1 of RAID Controller in SL 3</div>
<div class="t" style="right:772px;top:1255.0px;height:20px;line-height:20px;font-size:14px;color:#3d3320;font-family:'Liberation Sans',sans-serif;font-weight:400;">1.75 TiB</div>
<div class="t" style="right:643.5px;top:1255.0px;height:20px;line-height:20px;font-size:14px;color:#3d3320;font-family:'Liberation Sans',sans-serif;font-weight:400;">512 B</div>
<div class="t" style="right:547px;top:1255.0px;height:20px;line-height:20px;font-size:14px;color:#3d3320;font-family:'Liberation Sans',sans-serif;font-weight:400;">6 Gbps</div>
<div class="t" style="left:2030px;top:1255.5px;height:20px;line-height:20px;font-size:14px;color:#3d3320;font-family:'Liberation Mono',monospace;font-weight:400;-webkit-text-stroke:0.3px #3d3320;">test</div>
<div class="t" style="left:2151px;top:1255.5px;height:20px;line-height:20px;font-size:14px;color:#3d3320;font-family:'Liberation Mono',monospace;font-weight:400;-webkit-text-stroke:0.3px #3d3320;">KR-0GKTF1-SK500-29D-05XK-A02</div>
<div class="b" style="left:1339px;top:1303px;width:36px;height:36px;background:#fcfcfa;border:1px solid #e4e3df;border-radius:9px;"></div>
<svg class="ic" style="left:1349px;top:1313px;width:16px;height:16px" viewBox="0 0 24 24" fill="none" stroke="#8a877d" stroke-width="1.7" stroke-linecap="round" stroke-linejoin="round"><path d="m15 18-6-6 6-6"/></svg>
<div class="t" style="left:1107.5px;width:600px;text-align:center;top:1309.0px;height:24px;line-height:24px;font-size:17px;color:#3d3320;font-family:'Liberation Sans',sans-serif;font-weight:400;">1 / 1</div>
<div class="b" style="left:1441px;top:1303px;width:36px;height:36px;background:#fcfcfa;border:1px solid #e4e3df;border-radius:9px;"></div>
<svg class="ic" style="left:1451px;top:1313px;width:16px;height:16px" viewBox="0 0 24 24" fill="none" stroke="#8a877d" stroke-width="1.7" stroke-linecap="round" stroke-linejoin="round"><path d="m9 18 6-6-6-6"/></svg></div></body></html>
